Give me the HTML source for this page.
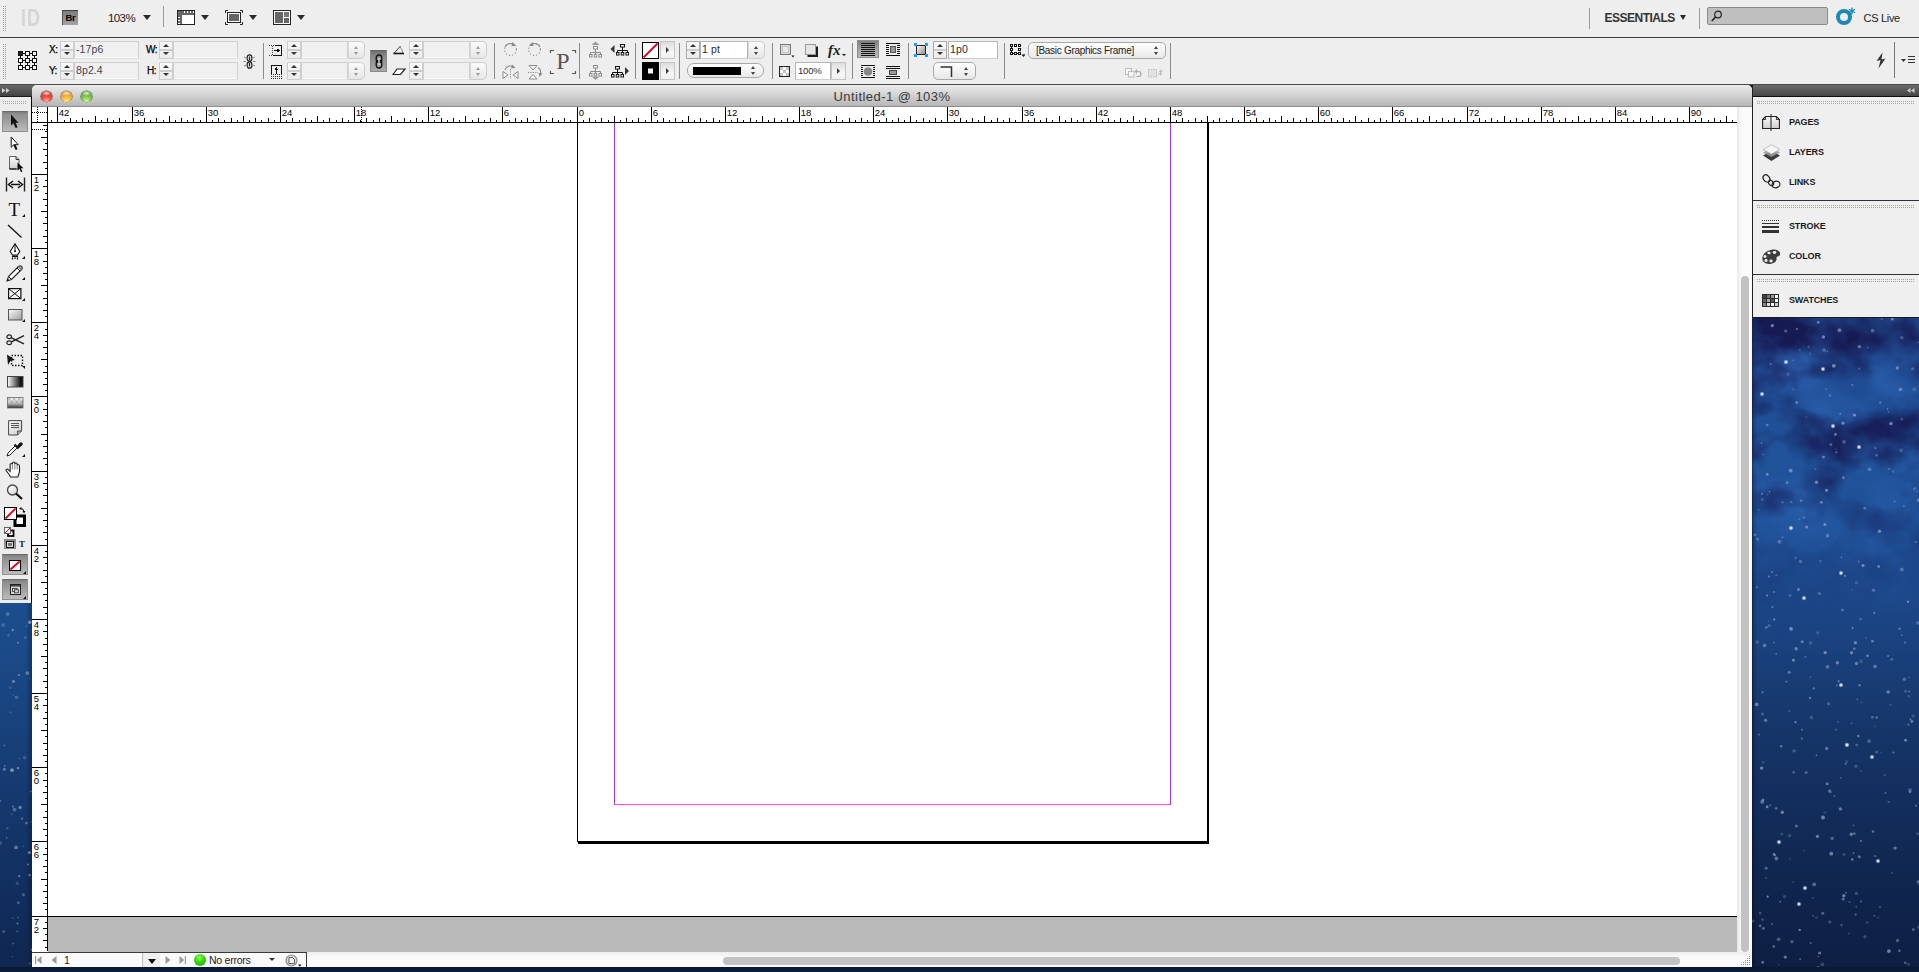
<!DOCTYPE html>
<html lang="en">
<head>
<meta charset="utf-8">
<title>Untitled-1 @ 103%</title>
<style>
*{box-sizing:border-box;margin:0;padding:0}
html,body{width:1919px;height:972px;overflow:hidden;background:#0d1c3a;font-family:"Liberation Sans",sans-serif;font-size:11px;color:#222}
.abs,.abs>*{position:absolute}
#root{position:relative;width:1919px;height:972px;overflow:hidden}
#root>*{position:absolute}

/* desktop */
#deskR{left:1752px;top:318px;width:167px;height:654px;background:
 linear-gradient(90deg,rgba(6,12,30,.6) 0,rgba(6,12,30,.2) 2px,rgba(6,12,30,0) 5px),
 linear-gradient(180deg,#1d4182 0,#1f4b92 60px,#20539a 130px,#1f5198 200px,#1c4a8d 260px,#1a417e 327px,#16376b 400px,#132e5d 480px,#10264f 560px,#0d1e42 654px);overflow:hidden}
#deskL{left:0;top:603px;width:32px;height:369px;background:linear-gradient(90deg,rgba(6,12,30,0) 26px,rgba(6,12,30,.35) 32px),linear-gradient(180deg,#1c4e8d 0,#1a4986 60px,#174079 140px,#14366a 220px,#112d5c 300px,#0f2750 369px);overflow:hidden}
#deskB{left:0;top:967px;width:1919px;height:5px;background:linear-gradient(180deg,#0a1730,#0e2044)}

/* app bar */
#appbar{left:0;top:0;width:1919px;height:37px;background:#eeeeee}
#appline{left:0;top:37px;width:1919px;height:1px;background:#3c3c3c}
#ctrl{left:0;top:38px;width:1919px;height:46px;background:#eeeeee}
#ctrlline{left:0;top:84px;width:1919px;height:1px;background:#4a4a4a}


/* ---- app bar widgets ---- */
.grip{width:4px;background-image:radial-gradient(circle at .5px .5px,#9a9a9a .55px,transparent .8px);background-size:2px 2px}
.tri{width:0;height:0;border-left:4px solid transparent;border-right:4px solid transparent;border-top:5px solid #2a2a2a}
.vsep{width:1px;background:#9a9a9a}
#idlogo{left:20.5px;top:4.5px;font-size:23px;line-height:26px;color:#d5d5d5;letter-spacing:1.2px;font-weight:bold;transform:scaleX(.78);transform-origin:0 0}
#br{left:62px;top:10px;width:16px;height:15px;background:linear-gradient(180deg,#7d7d7d,#a3a3a3);border-top:1px solid #444;border-left:1px solid #555;font-size:9.5px;font-weight:bold;line-height:14px;text-align:center;color:#000;letter-spacing:-.2px}
#zoomtxt{left:108px;top:11px;font-size:11.5px;line-height:14px;color:#222;letter-spacing:-.6px}
#ess{left:1604.5px;top:11px;font-size:12px;line-height:14px;color:#333;font-weight:bold;letter-spacing:-.5px}
#search{left:1707px;top:7px;width:121px;height:18px;background:#bfbfbf;border:1px solid #8a8a8a;border-radius:2px}
#cslive{left:1863.5px;top:11px;font-size:11px;line-height:14px;color:#222;letter-spacing:-.3px}
/* ---- control panel widgets ---- */
.lab{font-size:10px;line-height:12px;color:#000;letter-spacing:-.5px;-webkit-text-stroke:.25px #000}
.sp{width:14px;height:18px;border:1px solid #cdcdcd;background:linear-gradient(180deg,#fafafa,#ebebeb)}
.sp:before{content:"";position:absolute;left:2.5px;top:2px;border-left:3.5px solid transparent;border-right:3.5px solid transparent;border-bottom:3.5px solid #333}
.sp:after{content:"";position:absolute;left:2.5px;top:10px;border-left:3.5px solid transparent;border-right:3.5px solid transparent;border-top:3.5px solid #333}
.sp i{position:absolute;left:0;top:7px;width:12px;height:2px;background:#cdcdcd}
.fd{height:18px;border:1px solid #cfcfcf;border-bottom-color:#e2e2e2;background:#f0f0f0;box-shadow:inset 0 -1px 0 #fbfbfb;font-size:10.5px;letter-spacing:.1px;line-height:15px;padding-left:1px;color:#454550}
.fd.w{background:#fff;border-color:#b5b5b5;border-bottom-color:#cfcfcf;color:#2a2a33}
.pp{width:17px;height:18px;border:1px solid #cdcdcd;border-left:1px solid #d8d8d8;border-radius:0 5px 5px 0;background:linear-gradient(180deg,#fbfbfb,#e6e6e6)}
.pp:before{content:"";position:absolute;left:5px;top:4px;border-left:2.5px solid transparent;border-right:2.5px solid transparent;border-bottom:3px solid #9a9a9a}
.pp:after{content:"";position:absolute;left:5px;top:10px;border-left:2.5px solid transparent;border-right:2.5px solid transparent;border-top:3px solid #9a9a9a}
.pp.d:before{border-bottom-color:#444}.pp.d:after{border-top-color:#444}
.ab{width:15px;height:18px;border:1px solid #c4c4c4;background:linear-gradient(180deg,#dcdcdc,#f6f6f6 60%,#f2f2f2)}
.ab:after{content:"";position:absolute;left:5px;top:4.5px;border-top:3.5px solid transparent;border-bottom:3.5px solid transparent;border-left:3.5px solid #3a3a3a}
.ico{overflow:visible}
.sp.e{border-color:#a9a9a9}
.fd.s{font-size:9.5px;letter-spacing:-.2px;padding-left:2px}

/* tools */
#toolhead{left:0;top:85px;width:40px;height:12px;background:linear-gradient(180deg,#6a6a6a,#3e3e3e)}
#tools{left:0;top:97px;width:31px;height:506px;background:#ededed}
#toolline{left:0;top:96px;width:32px;height:1px;background:#1a1a1a}
#toolsR{left:31px;top:97px;width:1px;height:506px;background:#000}

/* doc window */
#win{left:32px;top:85px;width:1720px;height:882px;background:#fff;border-radius:5px 5px 0 0;overflow:hidden}
#win>*{position:absolute}
#title{left:0;top:0;width:1720px;height:22px;background:linear-gradient(180deg,#ebebeb 0,#d7d7d7 40%,#c4c4c4 75%,#b7b7b7 100%);border-bottom:1px solid #8c8c8c;text-align:center;font-size:13px;line-height:23.500px;color:#3a3a3a;letter-spacing:.45px}
#winL{display:none}
.hr{left:16px;top:22px}
.vr{left:0;top:38px}
#corner{left:0;top:22px;width:16px;height:16px;background:#fff;border-right:1px solid #000;border-bottom:1px solid #000}
#paste{left:16px;top:38px;width:1689px;height:793px;background:#fff;overflow:hidden}
#pasteline{left:16px;top:831px;width:1689px;height:1px;background:#000}
#gray{left:16px;top:832px;width:1689px;height:35px;background:#bababa}
#vscroll{left:1705px;top:22px;width:15px;height:845px;background:linear-gradient(90deg,#e8e8e8,#fafafa 30%,#fafafa)}
#vthumb{left:1709px;top:191px;width:8px;height:676px;background:#c2c2c2;border-radius:4px}
#status{left:0;top:867px;width:1720px;height:15px;background:linear-gradient(180deg,#ececec,#fbfbfb 40%,#fbfbfb)}
#hthumb{left:691px;top:872px;width:957px;height:8px;background:#c2c2c2;border-radius:4px}


/* ---- tools ---- */
#tools svg,#tools div{position:absolute}
.tbtn{left:2px;width:26px;height:21px;background:linear-gradient(180deg,#7e7e7e 0,#8f8f8f 12%,#a2a2a2 55%,#bcbcbc 100%);border:1px solid #8f8f8f;border-top-color:#6c6c6c}
.ct{width:0;height:0;border-left:3px solid transparent;border-bottom:3px solid #111}
/* ---- panel ---- */
#panel div,#panel svg{position:absolute}
.pgrip{left:5px;width:158px;height:3px;background-image:radial-gradient(circle at .5px .5px,#a5a5a5 .6px,transparent .85px);background-size:2px 2px}
.plab{left:37px;margin-top:-1px;font-size:9px;font-weight:bold;line-height:11px;color:#1a1a1a;letter-spacing:-.15px}
.psep{left:0;width:167px;height:1px;background:#2e3138}
/* ---- title buttons ---- */
.tl{width:11px;height:11px;border-radius:6px;top:5.5px;margin-left:.5px}
/* ---- status ---- */
#status div,#status svg{position:absolute}

/* page */
#page{left:529px;top:-98px;width:631px;height:817px;border:1px solid #000;background:#fff;box-shadow:1px 2px 0 #000}
#margin{left:566px;top:-60px;width:557px;height:742px;border:1px solid #9a33ff;border-bottom-color:#ff4dff}

/* right panel */
#phead{left:1752px;top:85px;width:167px;height:11px;background:linear-gradient(180deg,#6c6c6c,#454545)}
#pheadline{left:1752px;top:96px;width:167px;height:1px;background:#111}
#panel{left:1752px;top:97px;width:167px;height:221px;background:#efefef}
#panelL{left:1752px;top:85px;width:1px;height:233px;background:#222}
#panelB{left:1752px;top:317px;width:167px;height:1px;background:#1a1a1a}
</style>
</head>
<body>
<div id="root">
  <div id="deskR"><svg width="167" height="654"><defs>
<filter id="nebD" x="0" y="0" width="100%" height="100%" color-interpolation-filters="sRGB"><feTurbulence type="fractalNoise" baseFrequency="0.017 0.021" numOctaves="4" seed="5"/><feColorMatrix type="matrix" values="0 0 0 0 0.085  0 0 0 0 0.10  0 0 0 0 0.32  2.6 0 0 0 -1.02"/></filter>
<filter id="nebL" x="0" y="0" width="100%" height="100%" color-interpolation-filters="sRGB"><feTurbulence type="fractalNoise" baseFrequency="0.013 0.016" numOctaves="3" seed="11"/><feColorMatrix type="matrix" values="0 0 0 0 0.20  0 0 0 0 0.42  0 0 0 0 0.74  0 2.2 0 0 -0.95"/></filter>
<linearGradient id="nfade" x1="0" y1="0" x2="0" y2="1"><stop offset="0" stop-color="#fff"/><stop offset=".45" stop-color="#ddd"/><stop offset=".8" stop-color="#444"/><stop offset="1" stop-color="#000"/></linearGradient>
<mask id="nmask"><rect width="167" height="300" fill="url(#nfade)"/></mask></defs>
<g mask="url(#nmask)"><rect width="167" height="300" filter="url(#nebL)"/><rect width="167" height="300" filter="url(#nebD)"/></g>
<circle cx="54.1" cy="98.7" r="0.8" fill="#b4c2dc" opacity="0.23"/>
<circle cx="89.5" cy="239.2" r="0.8" fill="#b4c2dc" opacity="0.56"/>
<circle cx="35.9" cy="56.2" r="1.7" fill="#b4c2dc" opacity="0.23"/>
<circle cx="15.1" cy="277.6" r="1.0" fill="#b4c2dc" opacity="0.58"/>
<circle cx="105.3" cy="381.3" r="0.8" fill="#b4c2dc" opacity="0.43"/>
<circle cx="66.2" cy="638.5" r="0.8" fill="#b4c2dc" opacity="0.42"/>
<circle cx="22.2" cy="274.1" r="1.0" fill="#b4c2dc" opacity="0.43"/>
<circle cx="93.6" cy="446.0" r="1.0" fill="#b4c2dc" opacity="0.43"/>
<circle cx="106.7" cy="243.5" r="1.0" fill="#b4c2dc" opacity="0.43"/>
<circle cx="103.4" cy="324.7" r="1.7" fill="#b4c2dc" opacity="0.51"/>
<circle cx="77.8" cy="603.9" r="1.5" fill="#b4c2dc" opacity="0.32"/>
<circle cx="132.7" cy="457.1" r="1.2" fill="#b4c2dc" opacity="0.23"/>
<circle cx="50.1" cy="323.8" r="1.5" fill="#b4c2dc" opacity="0.49"/>
<circle cx="48.1" cy="641.0" r="1.0" fill="#b4c2dc" opacity="0.40"/>
<circle cx="27.5" cy="223.7" r="1.9" fill="#b4c2dc" opacity="0.37"/>
<circle cx="160.7" cy="50.8" r="1.5" fill="#b4c2dc" opacity="0.34"/>
<circle cx="58.5" cy="324.8" r="1.9" fill="#b4c2dc" opacity="0.23"/>
<circle cx="15.6" cy="176.5" r="1.0" fill="#b4c2dc" opacity="0.22"/>
<circle cx="117.1" cy="423.2" r="1.9" fill="#b4c2dc" opacity="0.31"/>
<circle cx="64.4" cy="437.3" r="0.8" fill="#b4c2dc" opacity="0.58"/>
<circle cx="59.4" cy="399.5" r="1.9" fill="#b4c2dc" opacity="0.22"/>
<circle cx="128.3" cy="84.6" r="1.2" fill="#b4c2dc" opacity="0.36"/>
<circle cx="153.1" cy="324.7" r="1.1" fill="#b4c2dc" opacity="0.38"/>
<circle cx="91.8" cy="577.7" r="1.7" fill="#b4c2dc" opacity="0.55"/>
<circle cx="46.5" cy="271.6" r="1.5" fill="#b4c2dc" opacity="0.47"/>
<circle cx="63.5" cy="150.9" r="1.0" fill="#b4c2dc" opacity="0.27"/>
<circle cx="38.7" cy="152.6" r="1.9" fill="#b4c2dc" opacity="0.53"/>
<circle cx="30.5" cy="184.4" r="1.1" fill="#b4c2dc" opacity="0.37"/>
<circle cx="61.7" cy="370.4" r="1.1" fill="#b4c2dc" opacity="0.48"/>
<circle cx="86.1" cy="403.9" r="0.8" fill="#b4c2dc" opacity="0.38"/>
<circle cx="145.5" cy="622.5" r="1.7" fill="#b4c2dc" opacity="0.36"/>
<circle cx="65.8" cy="314.9" r="1.7" fill="#b4c2dc" opacity="0.22"/>
<circle cx="11.2" cy="136.5" r="1.1" fill="#b4c2dc" opacity="0.24"/>
<circle cx="100.3" cy="67.0" r="1.1" fill="#b4c2dc" opacity="0.41"/>
<circle cx="158.5" cy="401.4" r="1.0" fill="#b4c2dc" opacity="0.55"/>
<circle cx="102.5" cy="97.2" r="1.4" fill="#b4c2dc" opacity="0.58"/>
<circle cx="100.6" cy="310.1" r="1.0" fill="#b4c2dc" opacity="0.54"/>
<circle cx="165.8" cy="304.8" r="1.9" fill="#b4c2dc" opacity="0.32"/>
<circle cx="24.1" cy="490.3" r="1.4" fill="#b4c2dc" opacity="0.39"/>
<circle cx="115.6" cy="337.7" r="1.2" fill="#b4c2dc" opacity="0.58"/>
<circle cx="88.2" cy="95.9" r="0.8" fill="#b4c2dc" opacity="0.50"/>
<circle cx="49.8" cy="420.5" r="1.0" fill="#b4c2dc" opacity="0.48"/>
<circle cx="43.6" cy="239.8" r="1.1" fill="#b4c2dc" opacity="0.34"/>
<circle cx="37.2" cy="354.2" r="1.5" fill="#b4c2dc" opacity="0.45"/>
<circle cx="102.4" cy="515.6" r="1.2" fill="#b4c2dc" opacity="0.52"/>
<circle cx="136.7" cy="483.9" r="1.2" fill="#b4c2dc" opacity="0.28"/>
<circle cx="82.3" cy="478.1" r="0.8" fill="#b4c2dc" opacity="0.52"/>
<circle cx="78.9" cy="126.6" r="1.5" fill="#b4c2dc" opacity="0.38"/>
<circle cx="156.5" cy="646.2" r="1.5" fill="#b4c2dc" opacity="0.23"/>
<circle cx="17.1" cy="307.4" r="1.5" fill="#b4c2dc" opacity="0.28"/>
<circle cx="104.2" cy="588.8" r="0.8" fill="#b4c2dc" opacity="0.39"/>
<circle cx="109.0" cy="523.0" r="1.0" fill="#b4c2dc" opacity="0.53"/>
<circle cx="20.0" cy="254.1" r="1.2" fill="#b4c2dc" opacity="0.39"/>
<circle cx="29.8" cy="516.1" r="1.5" fill="#b4c2dc" opacity="0.23"/>
<circle cx="158.0" cy="472.1" r="1.9" fill="#b4c2dc" opacity="0.36"/>
<circle cx="158.1" cy="474.0" r="1.1" fill="#b4c2dc" opacity="0.60"/>
<circle cx="4.6" cy="386.4" r="1.9" fill="#b4c2dc" opacity="0.52"/>
<circle cx="24.4" cy="540.5" r="1.9" fill="#b4c2dc" opacity="0.46"/>
<circle cx="58.5" cy="358.8" r="1.1" fill="#b4c2dc" opacity="0.21"/>
<circle cx="133.5" cy="475.0" r="1.0" fill="#b4c2dc" opacity="0.41"/>
<circle cx="155.9" cy="283.7" r="1.2" fill="#b4c2dc" opacity="0.53"/>
<circle cx="35.2" cy="164.7" r="1.4" fill="#b4c2dc" opacity="0.40"/>
<circle cx="127.5" cy="213.2" r="1.7" fill="#b4c2dc" opacity="0.53"/>
<circle cx="10.2" cy="483.9" r="1.9" fill="#b4c2dc" opacity="0.46"/>
<circle cx="136.1" cy="338.0" r="1.1" fill="#b4c2dc" opacity="0.41"/>
<circle cx="87.4" cy="12.2" r="1.9" fill="#b4c2dc" opacity="0.51"/>
<circle cx="101.6" cy="507.5" r="1.1" fill="#b4c2dc" opacity="0.27"/>
<circle cx="79.1" cy="474.3" r="0.8" fill="#b4c2dc" opacity="0.33"/>
<circle cx="86.6" cy="363.3" r="1.0" fill="#b4c2dc" opacity="0.55"/>
<circle cx="9.5" cy="125.1" r="0.8" fill="#b4c2dc" opacity="0.51"/>
<circle cx="84.8" cy="367.4" r="1.0" fill="#b4c2dc" opacity="0.38"/>
<circle cx="102.3" cy="330.6" r="1.2" fill="#b4c2dc" opacity="0.48"/>
<circle cx="75.5" cy="348.8" r="1.9" fill="#b4c2dc" opacity="0.40"/>
<circle cx="41.4" cy="342.2" r="1.4" fill="#b4c2dc" opacity="0.57"/>
<circle cx="149.1" cy="132.5" r="1.9" fill="#b4c2dc" opacity="0.25"/>
<circle cx="20.3" cy="289.1" r="1.0" fill="#b4c2dc" opacity="0.47"/>
<circle cx="71.5" cy="139.1" r="1.4" fill="#b4c2dc" opacity="0.51"/>
<circle cx="149.8" cy="101.0" r="1.5" fill="#b4c2dc" opacity="0.26"/>
<circle cx="147.4" cy="632.8" r="1.2" fill="#b4c2dc" opacity="0.50"/>
<circle cx="15.7" cy="578.7" r="1.1" fill="#b4c2dc" opacity="0.60"/>
<circle cx="139.0" cy="105.6" r="1.7" fill="#b4c2dc" opacity="0.60"/>
<circle cx="67.4" cy="275.5" r="1.5" fill="#b4c2dc" opacity="0.33"/>
<circle cx="120.6" cy="12.7" r="1.9" fill="#b4c2dc" opacity="0.38"/>
<circle cx="3.0" cy="216.8" r="1.4" fill="#b4c2dc" opacity="0.40"/>
<circle cx="10.7" cy="644.2" r="1.2" fill="#b4c2dc" opacity="0.59"/>
<circle cx="17.5" cy="173.7" r="0.8" fill="#b4c2dc" opacity="0.56"/>
<circle cx="30.3" cy="494.3" r="1.7" fill="#b4c2dc" opacity="0.54"/>
<circle cx="112.9" cy="618.7" r="1.7" fill="#b4c2dc" opacity="0.26"/>
<circle cx="153.5" cy="373.2" r="1.5" fill="#b4c2dc" opacity="0.24"/>
<circle cx="9.6" cy="450.1" r="1.7" fill="#b4c2dc" opacity="0.56"/>
<circle cx="44.9" cy="11.0" r="1.0" fill="#b4c2dc" opacity="0.52"/>
<circle cx="14.0" cy="560.0" r="1.0" fill="#b4c2dc" opacity="0.31"/>
<circle cx="20.3" cy="7.6" r="1.7" fill="#b4c2dc" opacity="0.57"/>
<circle cx="44.7" cy="84.5" r="1.2" fill="#b4c2dc" opacity="0.58"/>
<circle cx="161.9" cy="171.3" r="1.1" fill="#b4c2dc" opacity="0.28"/>
<circle cx="52.1" cy="199.5" r="1.2" fill="#b4c2dc" opacity="0.32"/>
<circle cx="83.5" cy="116.3" r="1.5" fill="#b4c2dc" opacity="0.52"/>
<circle cx="166.1" cy="24.2" r="0.8" fill="#b4c2dc" opacity="0.49"/>
<circle cx="92.0" cy="123.9" r="1.9" fill="#b4c2dc" opacity="0.30"/>
<circle cx="74.7" cy="430.5" r="1.7" fill="#b4c2dc" opacity="0.46"/>
<circle cx="91.2" cy="581.2" r="1.4" fill="#b4c2dc" opacity="0.48"/>
<circle cx="164.1" cy="224.1" r="1.1" fill="#b4c2dc" opacity="0.36"/>
<circle cx="58.0" cy="35.6" r="1.1" fill="#b4c2dc" opacity="0.21"/>
<circle cx="104.4" cy="575.4" r="1.7" fill="#b4c2dc" opacity="0.27"/>
<circle cx="14.1" cy="550.2" r="1.4" fill="#b4c2dc" opacity="0.44"/>
<circle cx="115.7" cy="29.6" r="1.1" fill="#b4c2dc" opacity="0.26"/>
<circle cx="74.5" cy="172.2" r="1.5" fill="#b4c2dc" opacity="0.59"/>
<circle cx="91.4" cy="159.9" r="1.4" fill="#b4c2dc" opacity="0.29"/>
<circle cx="30.6" cy="219.3" r="1.0" fill="#b4c2dc" opacity="0.39"/>
<circle cx="84.0" cy="131.4" r="0.8" fill="#b4c2dc" opacity="0.24"/>
<circle cx="136.4" cy="94.1" r="0.8" fill="#b4c2dc" opacity="0.36"/>
<circle cx="50.0" cy="411.8" r="1.0" fill="#b4c2dc" opacity="0.43"/>
<circle cx="88.4" cy="490.9" r="1.7" fill="#b4c2dc" opacity="0.51"/>
<circle cx="120.4" cy="323.2" r="1.4" fill="#b4c2dc" opacity="0.49"/>
<circle cx="107.4" cy="28.6" r="1.7" fill="#b4c2dc" opacity="0.49"/>
<circle cx="135.6" cy="91.1" r="0.8" fill="#b4c2dc" opacity="0.53"/>
<circle cx="97.5" cy="583.9" r="1.2" fill="#b4c2dc" opacity="0.23"/>
<circle cx="7.0" cy="416.7" r="1.0" fill="#b4c2dc" opacity="0.35"/>
<circle cx="75.4" cy="33.2" r="0.8" fill="#b4c2dc" opacity="0.45"/>
<circle cx="113.7" cy="320.0" r="0.8" fill="#b4c2dc" opacity="0.38"/>
<circle cx="11.7" cy="609.9" r="1.0" fill="#b4c2dc" opacity="0.46"/>
<circle cx="11.0" cy="481.9" r="1.4" fill="#b4c2dc" opacity="0.52"/>
<circle cx="141.3" cy="153.5" r="1.2" fill="#b4c2dc" opacity="0.29"/>
<circle cx="108.5" cy="301.1" r="1.7" fill="#b4c2dc" opacity="0.23"/>
<circle cx="152.0" cy="187.9" r="0.8" fill="#b4c2dc" opacity="0.45"/>
<circle cx="107.3" cy="50.7" r="1.1" fill="#b4c2dc" opacity="0.33"/>
<circle cx="108.8" cy="453.1" r="1.1" fill="#b4c2dc" opacity="0.20"/>
<circle cx="10.1" cy="175.8" r="1.0" fill="#b4c2dc" opacity="0.48"/>
<circle cx="112.8" cy="190.2" r="1.4" fill="#b4c2dc" opacity="0.39"/>
<circle cx="77.9" cy="77.5" r="1.2" fill="#b4c2dc" opacity="0.32"/>
<circle cx="14.3" cy="309.3" r="1.4" fill="#b4c2dc" opacity="0.38"/>
<circle cx="136.9" cy="633.1" r="1.9" fill="#b4c2dc" opacity="0.60"/>
<circle cx="64.6" cy="599.4" r="1.2" fill="#b4c2dc" opacity="0.23"/>
<circle cx="15.1" cy="488.9" r="1.4" fill="#b4c2dc" opacity="0.58"/>
<circle cx="22.1" cy="536.4" r="1.4" fill="#b4c2dc" opacity="0.55"/>
<circle cx="117.5" cy="151.3" r="1.9" fill="#b4c2dc" opacity="0.36"/>
<circle cx="26.6" cy="621.3" r="1.9" fill="#b4c2dc" opacity="0.36"/>
<circle cx="121.4" cy="272.2" r="1.7" fill="#b4c2dc" opacity="0.33"/>
<circle cx="140.3" cy="1.1" r="1.5" fill="#b4c2dc" opacity="0.54"/>
<circle cx="20.0" cy="605.9" r="0.8" fill="#b4c2dc" opacity="0.56"/>
<circle cx="48.4" cy="243.4" r="1.7" fill="#b4c2dc" opacity="0.36"/>
<circle cx="145.3" cy="50.0" r="1.7" fill="#b4c2dc" opacity="0.50"/>
<circle cx="142.7" cy="183.5" r="0.8" fill="#b4c2dc" opacity="0.53"/>
<circle cx="47.7" cy="611.9" r="1.2" fill="#b4c2dc" opacity="0.59"/>
<circle cx="72.9" cy="206.4" r="1.5" fill="#b4c2dc" opacity="0.51"/>
<circle cx="71.4" cy="19.0" r="1.7" fill="#b4c2dc" opacity="0.57"/>
<circle cx="157.1" cy="359.2" r="1.0" fill="#b4c2dc" opacity="0.22"/>
<circle cx="122.3" cy="294.9" r="1.1" fill="#b4c2dc" opacity="0.46"/>
<circle cx="47.8" cy="32.0" r="1.1" fill="#b4c2dc" opacity="0.27"/>
<circle cx="69.3" cy="184.3" r="1.4" fill="#b4c2dc" opacity="0.50"/>
<circle cx="163.0" cy="170.2" r="1.2" fill="#b4c2dc" opacity="0.32"/>
<circle cx="93.1" cy="257.9" r="1.1" fill="#b4c2dc" opacity="0.46"/>
<circle cx="12.6" cy="327.4" r="1.9" fill="#b4c2dc" opacity="0.42"/>
<circle cx="75.6" cy="217.7" r="1.9" fill="#b4c2dc" opacity="0.37"/>
<circle cx="91.5" cy="159.6" r="1.1" fill="#b4c2dc" opacity="0.34"/>
<circle cx="15.2" cy="156.4" r="1.4" fill="#b4c2dc" opacity="0.52"/>
<circle cx="33.8" cy="13.1" r="1.7" fill="#b4c2dc" opacity="0.35"/>
<circle cx="124.6" cy="137.3" r="1.4" fill="#b4c2dc" opacity="0.34"/>
<circle cx="10.4" cy="181.5" r="1.5" fill="#b4c2dc" opacity="0.25"/>
<circle cx="84.1" cy="411.8" r="1.2" fill="#b4c2dc" opacity="0.24"/>
<circle cx="149.8" cy="251.5" r="1.9" fill="#b4c2dc" opacity="0.37"/>
<circle cx="52.1" cy="532.6" r="0.8" fill="#b4c2dc" opacity="0.25"/>
<circle cx="71.0" cy="499.5" r="1.9" fill="#b4c2dc" opacity="0.59"/>
<circle cx="81.8" cy="47.8" r="1.9" fill="#b4c2dc" opacity="0.59"/>
<circle cx="41.5" cy="71.3" r="1.1" fill="#b4c2dc" opacity="0.26"/>
<circle cx="162.3" cy="71.2" r="1.9" fill="#b4c2dc" opacity="0.23"/>
<circle cx="129.7" cy="0.9" r="1.1" fill="#b4c2dc" opacity="0.29"/>
<circle cx="153.6" cy="422.2" r="1.4" fill="#b4c2dc" opacity="0.58"/>
<circle cx="104.6" cy="345.5" r="1.7" fill="#b4c2dc" opacity="0.48"/>
<circle cx="18.7" cy="46.0" r="1.2" fill="#b4c2dc" opacity="0.36"/>
<circle cx="37.3" cy="393.1" r="0.8" fill="#b4c2dc" opacity="0.41"/>
<circle cx="166.4" cy="182.2" r="1.5" fill="#b4c2dc" opacity="0.46"/>
<circle cx="147.6" cy="310.8" r="1.2" fill="#b4c2dc" opacity="0.42"/>
<circle cx="4.9" cy="269.3" r="1.4" fill="#b4c2dc" opacity="0.22"/>
<circle cx="32.4" cy="578.7" r="1.7" fill="#b4c2dc" opacity="0.23"/>
<circle cx="38.0" cy="277.5" r="1.5" fill="#b4c2dc" opacity="0.29"/>
<circle cx="5.7" cy="221.1" r="1.7" fill="#b4c2dc" opacity="0.34"/>
<circle cx="66.2" cy="4.4" r="1.4" fill="#b4c2dc" opacity="0.50"/>
<circle cx="84.3" cy="134.2" r="1.2" fill="#b4c2dc" opacity="0.32"/>
<circle cx="136.9" cy="150.9" r="1.2" fill="#b4c2dc" opacity="0.31"/>
<circle cx="148.5" cy="71.3" r="1.9" fill="#b4c2dc" opacity="0.44"/>
<circle cx="149.7" cy="317.2" r="0.8" fill="#b4c2dc" opacity="0.58"/>
<circle cx="24.4" cy="257.3" r="1.2" fill="#b4c2dc" opacity="0.21"/>
<circle cx="99.6" cy="271.7" r="0.8" fill="#b4c2dc" opacity="0.27"/>
<circle cx="75.1" cy="465.7" r="1.5" fill="#b4c2dc" opacity="0.49"/>
<circle cx="166.6" cy="609.3" r="1.5" fill="#b4c2dc" opacity="0.28"/>
<circle cx="109.0" cy="343.2" r="1.9" fill="#b4c2dc" opacity="0.21"/>
<circle cx="111.0" cy="247.6" r="1.5" fill="#b4c2dc" opacity="0.59"/>
<circle cx="73.9" cy="71.3" r="1.0" fill="#b4c2dc" opacity="0.31"/>
<circle cx="58.7" cy="624.9" r="1.0" fill="#b4c2dc" opacity="0.42"/>
<circle cx="126.7" cy="248.6" r="1.4" fill="#b4c2dc" opacity="0.53"/>
<circle cx="72.2" cy="32.2" r="1.9" fill="#b4c2dc" opacity="0.28"/>
<circle cx="90.4" cy="291.9" r="1.5" fill="#b4c2dc" opacity="0.35"/>
<circle cx="149.8" cy="19.8" r="1.7" fill="#b4c2dc" opacity="0.30"/>
<circle cx="104.4" cy="264.7" r="1.7" fill="#b4c2dc" opacity="0.21"/>
<circle cx="10.5" cy="601.7" r="1.4" fill="#b4c2dc" opacity="0.28"/>
<circle cx="10.5" cy="396.1" r="1.5" fill="#b4c2dc" opacity="0.31"/>
<circle cx="159.9" cy="403.5" r="1.4" fill="#b4c2dc" opacity="0.50"/>
<circle cx="115.2" cy="604.4" r="1.4" fill="#b4c2dc" opacity="0.20"/>
<circle cx="126.2" cy="599.4" r="1.0" fill="#b4c2dc" opacity="0.21"/>
<circle cx="39.1" cy="310.8" r="1.9" fill="#b4c2dc" opacity="0.58"/>
<circle cx="64.5" cy="164.2" r="1.7" fill="#b4c2dc" opacity="0.53"/>
<circle cx="22.2" cy="324.7" r="0.8" fill="#b4c2dc" opacity="0.52"/>
<circle cx="123.3" cy="538.1" r="1.1" fill="#b4c2dc" opacity="0.44"/>
<circle cx="54.7" cy="209.0" r="1.5" fill="#b4c2dc" opacity="0.51"/>
<circle cx="99.5" cy="334.8" r="1.7" fill="#b4c2dc" opacity="0.50"/>
<circle cx="41.3" cy="42.3" r="0.8" fill="#b4c2dc" opacity="0.39"/>
<circle cx="91.0" cy="105.1" r="1.7" fill="#b4c2dc" opacity="0.55"/>
<circle cx="165.0" cy="173.2" r="1.0" fill="#b4c2dc" opacity="0.28"/>
<circle cx="70.3" cy="646.4" r="1.9" fill="#b4c2dc" opacity="0.27"/>
<circle cx="22.2" cy="301.4" r="1.2" fill="#b4c2dc" opacity="0.50"/>
<circle cx="141.4" cy="434.5" r="1.0" fill="#b4c2dc" opacity="0.51"/>
<circle cx="49.1" cy="182.7" r="1.4" fill="#b4c2dc" opacity="0.35"/>
<circle cx="123.3" cy="130.3" r="1.2" fill="#b4c2dc" opacity="0.27"/>
<circle cx="39.3" cy="184.0" r="1.2" fill="#b4c2dc" opacity="0.33"/>
<circle cx="66.1" cy="649.1" r="1.2" fill="#b4c2dc" opacity="0.46"/>
<circle cx="16.8" cy="303.4" r="0.8" fill="#b4c2dc" opacity="0.24"/>
<circle cx="79.3" cy="535.7" r="1.9" fill="#b4c2dc" opacity="0.57"/>
<circle cx="6.7" cy="192.1" r="1.0" fill="#b4c2dc" opacity="0.22"/>
<circle cx="100.3" cy="541.5" r="1.2" fill="#b4c2dc" opacity="0.57"/>
<circle cx="62.2" cy="566.4" r="1.9" fill="#b4c2dc" opacity="0.44"/>
<circle cx="129.4" cy="434.8" r="0.8" fill="#b4c2dc" opacity="0.24"/>
<circle cx="99.6" cy="405.4" r="1.2" fill="#b4c2dc" opacity="0.21"/>
<circle cx="56.8" cy="28.9" r="1.4" fill="#b4c2dc" opacity="0.22"/>
<circle cx="122.3" cy="597.7" r="0.8" fill="#b4c2dc" opacity="0.53"/>
<circle cx="68.3" cy="243.2" r="1.4" fill="#b4c2dc" opacity="0.23"/>
<circle cx="5.3" cy="324.1" r="1.9" fill="#b4c2dc" opacity="0.23"/>
<circle cx="16.9" cy="258.5" r="1.1" fill="#b4c2dc" opacity="0.46"/>
<circle cx="15.2" cy="107.1" r="1.4" fill="#b4c2dc" opacity="0.36"/>
<circle cx="47.3" cy="201.2" r="0.8" fill="#b4c2dc" opacity="0.32"/>
<circle cx="94.6" cy="443.8" r="1.5" fill="#b4c2dc" opacity="0.21"/>
<circle cx="128.0" cy="589.3" r="1.1" fill="#b4c2dc" opacity="0.34"/>
<circle cx="67.6" cy="635.0" r="1.5" fill="#b4c2dc" opacity="0.52"/>
<circle cx="70.8" cy="595.3" r="1.5" fill="#b4c2dc" opacity="0.40"/>
<circle cx="60.9" cy="579.8" r="1.1" fill="#b4c2dc" opacity="0.21"/>
<circle cx="92.1" cy="536.5" r="1.5" fill="#b4c2dc" opacity="0.23"/>
<circle cx="103.9" cy="448.3" r="1.7" fill="#b4c2dc" opacity="0.26"/>
<circle cx="58.1" cy="379.9" r="1.1" fill="#b4c2dc" opacity="0.52"/>
<circle cx="18.2" cy="487.4" r="1.1" fill="#b4c2dc" opacity="0.31"/>
<circle cx="139.8" cy="341.2" r="1.5" fill="#b4c2dc" opacity="0.31"/>
<circle cx="101.5" cy="535.1" r="0.9" fill="#b4c2dc" opacity="0.52"/>
<circle cx="103.6" cy="596.6" r="1.1" fill="#b4c2dc" opacity="0.42"/>
<circle cx="143.1" cy="530.1" r="1.7" fill="#b4c2dc" opacity="0.50"/>
<circle cx="138.5" cy="386.8" r="1.1" fill="#b4c2dc" opacity="0.21"/>
<circle cx="156.7" cy="378.2" r="1.3" fill="#b4c2dc" opacity="0.24"/>
<circle cx="41.3" cy="564.0" r="1.1" fill="#b4c2dc" opacity="0.21"/>
<circle cx="93.9" cy="574.7" r="0.9" fill="#b4c2dc" opacity="0.43"/>
<circle cx="54.1" cy="454.5" r="1.5" fill="#b4c2dc" opacity="0.39"/>
<circle cx="104.7" cy="427.1" r="1.5" fill="#b4c2dc" opacity="0.31"/>
<circle cx="41.6" cy="454.3" r="1.3" fill="#b4c2dc" opacity="0.36"/>
<circle cx="73.2" cy="334.6" r="1.7" fill="#b4c2dc" opacity="0.55"/>
<circle cx="77.7" cy="473.1" r="1.7" fill="#b4c2dc" opacity="0.47"/>
<circle cx="76.5" cy="385.7" r="1.5" fill="#b4c2dc" opacity="0.34"/>
<circle cx="11.2" cy="444.3" r="1.3" fill="#b4c2dc" opacity="0.23"/>
<circle cx="73.8" cy="493.8" r="0.9" fill="#b4c2dc" opacity="0.21"/>
<circle cx="21.8" cy="628.5" r="1.3" fill="#b4c2dc" opacity="0.47"/>
<circle cx="85.4" cy="344.7" r="1.7" fill="#b4c2dc" opacity="0.51"/>
<circle cx="109.0" cy="583.4" r="0.9" fill="#b4c2dc" opacity="0.50"/>
<circle cx="166.4" cy="566.4" r="0.9" fill="#b4c2dc" opacity="0.27"/>
<circle cx="163.9" cy="487.8" r="1.1" fill="#b4c2dc" opacity="0.44"/>
<circle cx="120.4" cy="399.3" r="1.3" fill="#b4c2dc" opacity="0.41"/>
<circle cx="42.1" cy="432.9" r="1.7" fill="#b4c2dc" opacity="0.30"/>
<circle cx="136.2" cy="373.9" r="1.7" fill="#b4c2dc" opacity="0.54"/>
<circle cx="80.2" cy="520.5" r="1.7" fill="#b4c2dc" opacity="0.38"/>
<circle cx="53.3" cy="339.0" r="1.1" fill="#b4c2dc" opacity="0.34"/>
<circle cx="106.3" cy="418.0" r="1.3" fill="#b4c2dc" opacity="0.51"/>
<circle cx="28.2" cy="583.7" r="0.9" fill="#b4c2dc" opacity="0.47"/>
<circle cx="8.1" cy="607.7" r="1.5" fill="#b4c2dc" opacity="0.39"/>
<circle cx="96.9" cy="615.6" r="0.9" fill="#b4c2dc" opacity="0.29"/>
<circle cx="89.5" cy="607.1" r="1.3" fill="#b4c2dc" opacity="0.29"/>
<circle cx="165.4" cy="515.8" r="1.3" fill="#b4c2dc" opacity="0.32"/>
<circle cx="13.6" cy="402.2" r="1.7" fill="#b4c2dc" opacity="0.46"/>
<circle cx="8.1" cy="595.1" r="1.3" fill="#b4c2dc" opacity="0.31"/>
<circle cx="161.3" cy="611.6" r="1.3" fill="#b4c2dc" opacity="0.46"/>
<circle cx="124.8" cy="399.5" r="1.3" fill="#b4c2dc" opacity="0.42"/>
<circle cx="72.2" cy="494.6" r="0.9" fill="#b4c2dc" opacity="0.25"/>
<circle cx="38.0" cy="540.6" r="0.9" fill="#b4c2dc" opacity="0.22"/>
<circle cx="94.7" cy="426.3" r="1.7" fill="#b4c2dc" opacity="0.33"/>
<circle cx="37.5" cy="517.8" r="1.7" fill="#b4c2dc" opacity="0.25"/>
<circle cx="61.2" cy="597.9" r="1.1" fill="#b4c2dc" opacity="0.25"/>
<circle cx="156.4" cy="406.7" r="1.1" fill="#b4c2dc" opacity="0.36"/>
<circle cx="10.6" cy="374.3" r="1.3" fill="#b4c2dc" opacity="0.34"/>
<circle cx="44.1" cy="330.8" r="1.7" fill="#b4c2dc" opacity="0.51"/>
<circle cx="99.3" cy="516.2" r="1.7" fill="#b4c2dc" opacity="0.53"/>
<circle cx="122.5" cy="408.3" r="0.9" fill="#b4c2dc" opacity="0.22"/>
<circle cx="88.8" cy="459.8" r="1.1" fill="#b4c2dc" opacity="0.26"/>
<circle cx="152.3" cy="361.3" r="1.7" fill="#b4c2dc" opacity="0.39"/>
<circle cx="157.1" cy="373.5" r="1.1" fill="#b4c2dc" opacity="0.38"/>
<circle cx="107.3" cy="538.8" r="1.5" fill="#b4c2dc" opacity="0.48"/>
<circle cx="29.2" cy="428.2" r="1.3" fill="#b4c2dc" opacity="0.42"/>
<circle cx="166.0" cy="563.8" r="1.5" fill="#b4c2dc" opacity="0.45"/>
<circle cx="1.1" cy="603.1" r="1.5" fill="#b4c2dc" opacity="0.23"/>
<circle cx="109.5" cy="384.4" r="0.9" fill="#b4c2dc" opacity="0.29"/>
<circle cx="107.6" cy="367.3" r="1.3" fill="#b4c2dc" opacity="0.45"/>
<circle cx="44.4" cy="508.1" r="1.5" fill="#b4c2dc" opacity="0.44"/>
<circle cx="153.2" cy="644.8" r="1.3" fill="#b4c2dc" opacity="0.42"/>
<circle cx="161.2" cy="398.0" r="1.7" fill="#b4c2dc" opacity="0.21"/>
<circle cx="43.5" cy="404.2" r="1.1" fill="#b4c2dc" opacity="0.53"/>
<circle cx="124.6" cy="433.9" r="1.5" fill="#b4c2dc" opacity="0.31"/>
<circle cx="39.9" cy="623.8" r="1.7" fill="#b4c2dc" opacity="0.36"/>
<circle cx="140.2" cy="555.1" r="0.9" fill="#b4c2dc" opacity="0.35"/>
<circle cx="121.0" cy="513.5" r="1.3" fill="#b4c2dc" opacity="0.48"/>
<circle cx="65.4" cy="518.4" r="1.7" fill="#b4c2dc" opacity="0.52"/>
<circle cx="24.1" cy="335.8" r="0.9" fill="#b4c2dc" opacity="0.42"/>
<circle cx="27.0" cy="646.6" r="0.9" fill="#b4c2dc" opacity="0.21"/>
<circle cx="23.1" cy="537.4" r="0.9" fill="#b4c2dc" opacity="0.44"/>
<circle cx="123.0" cy="348.5" r="1.7" fill="#b4c2dc" opacity="0.47"/>
<circle cx="33.3" cy="639.1" r="1.7" fill="#b4c2dc" opacity="0.51"/>
<circle cx="11.0" cy="610.8" r="1.5" fill="#b4c2dc" opacity="0.24"/>
<circle cx="34.4" cy="363.6" r="0.9" fill="#b4c2dc" opacity="0.53"/>
<circle cx="39" cy="210" r="2.3" fill="#dfe8f7" opacity=".3"/><circle cx="39" cy="210" r="1.5" fill="#f4f7ff" opacity=".8"/>
<circle cx="89" cy="255" r="2.3" fill="#dfe8f7" opacity=".3"/><circle cx="89" cy="255" r="1.5" fill="#f4f7ff" opacity=".8"/>
<circle cx="52" cy="280" r="2.3" fill="#dfe8f7" opacity=".3"/><circle cx="52" cy="280" r="1.5" fill="#f4f7ff" opacity=".8"/>
<circle cx="81" cy="108" r="2.3" fill="#dfe8f7" opacity=".3"/><circle cx="81" cy="108" r="1.5" fill="#f4f7ff" opacity=".8"/>
<circle cx="107" cy="129" r="2.3" fill="#dfe8f7" opacity=".3"/><circle cx="107" cy="129" r="1.5" fill="#f4f7ff" opacity=".8"/>
<circle cx="34" cy="44" r="2.3" fill="#dfe8f7" opacity=".3"/><circle cx="34" cy="44" r="1.5" fill="#f4f7ff" opacity=".8"/>
<circle cx="71" cy="51" r="2.3" fill="#dfe8f7" opacity=".3"/><circle cx="71" cy="51" r="1.5" fill="#f4f7ff" opacity=".8"/>
<circle cx="120" cy="439" r="2.3" fill="#dfe8f7" opacity=".3"/><circle cx="120" cy="439" r="1.5" fill="#f4f7ff" opacity=".8"/>
<circle cx="95" cy="427" r="2.3" fill="#dfe8f7" opacity=".3"/><circle cx="95" cy="427" r="1.5" fill="#f4f7ff" opacity=".8"/>
<circle cx="27" cy="524" r="2.3" fill="#dfe8f7" opacity=".3"/><circle cx="27" cy="524" r="1.5" fill="#f4f7ff" opacity=".8"/>
<circle cx="126" cy="543" r="2.3" fill="#dfe8f7" opacity=".3"/><circle cx="126" cy="543" r="1.5" fill="#f4f7ff" opacity=".8"/>
<circle cx="53" cy="570" r="2.3" fill="#dfe8f7" opacity=".3"/><circle cx="53" cy="570" r="1.5" fill="#f4f7ff" opacity=".8"/>
<circle cx="47" cy="586" r="2.3" fill="#dfe8f7" opacity=".3"/><circle cx="47" cy="586" r="1.5" fill="#f4f7ff" opacity=".8"/>
<circle cx="89" cy="367" r="2.3" fill="#dfe8f7" opacity=".3"/><circle cx="89" cy="367" r="1.5" fill="#f4f7ff" opacity=".8"/>
<circle cx="10" cy="76" r="2.3" fill="#dfe8f7" opacity=".3"/><circle cx="10" cy="76" r="1.5" fill="#f4f7ff" opacity=".8"/></svg></div>
  <div id="deskL"><svg width="32" height="370"><circle cx="14.5" cy="206.6" r="1.9" fill="#b4c2dc" opacity="0.38"/>
<circle cx="27.4" cy="70.1" r="1.9" fill="#b4c2dc" opacity="0.45"/>
<circle cx="25.4" cy="34.7" r="1.4" fill="#b4c2dc" opacity="0.26"/>
<circle cx="17.2" cy="328.6" r="0.8" fill="#b4c2dc" opacity="0.44"/>
<circle cx="12.7" cy="167.2" r="1.1" fill="#b4c2dc" opacity="0.45"/>
<circle cx="26.6" cy="23.3" r="0.8" fill="#b4c2dc" opacity="0.28"/>
<circle cx="7.7" cy="11.1" r="1.9" fill="#b4c2dc" opacity="0.33"/>
<circle cx="18.9" cy="72.1" r="1.2" fill="#b4c2dc" opacity="0.46"/>
<circle cx="16.0" cy="244.4" r="1.9" fill="#b4c2dc" opacity="0.46"/>
<circle cx="13.0" cy="203.4" r="1.0" fill="#b4c2dc" opacity="0.48"/>
<circle cx="10.1" cy="84.7" r="1.4" fill="#b4c2dc" opacity="0.21"/>
<circle cx="18.0" cy="39.8" r="1.0" fill="#b4c2dc" opacity="0.54"/>
<circle cx="12.4" cy="353.5" r="0.8" fill="#b4c2dc" opacity="0.29"/>
<circle cx="29.7" cy="19.3" r="1.7" fill="#b4c2dc" opacity="0.59"/>
<circle cx="12.7" cy="27.0" r="1.2" fill="#b4c2dc" opacity="0.51"/>
<circle cx="8.6" cy="32.2" r="1.5" fill="#b4c2dc" opacity="0.21"/>
<circle cx="13.1" cy="340.5" r="1.1" fill="#b4c2dc" opacity="0.30"/>
<circle cx="3.2" cy="22.1" r="1.9" fill="#b4c2dc" opacity="0.27"/>
<circle cx="17.9" cy="165.1" r="1.2" fill="#b4c2dc" opacity="0.59"/>
<circle cx="24.6" cy="154.7" r="1.7" fill="#b4c2dc" opacity="0.25"/>
<circle cx="13.5" cy="78.5" r="1.4" fill="#b4c2dc" opacity="0.55"/>
<circle cx="31.2" cy="218.7" r="0.8" fill="#b4c2dc" opacity="0.28"/>
<circle cx="12.6" cy="315.3" r="1.0" fill="#b4c2dc" opacity="0.22"/>
<circle cx="4.7" cy="162.9" r="0.8" fill="#b4c2dc" opacity="0.51"/>
<circle cx="10.5" cy="109.3" r="1.0" fill="#b4c2dc" opacity="0.23"/>
<circle cx="6.7" cy="234.9" r="0.8" fill="#b4c2dc" opacity="0.44"/>
<circle cx="11.9" cy="167.2" r="1.9" fill="#b4c2dc" opacity="0.53"/>
<circle cx="4.3" cy="142.5" r="1.1" fill="#b4c2dc" opacity="0.32"/>
<circle cx="7.3" cy="225.3" r="1.2" fill="#b4c2dc" opacity="0.26"/>
<circle cx="20.1" cy="204.4" r="1.7" fill="#b4c2dc" opacity="0.55"/>
<circle cx="19.3" cy="155.5" r="1.0" fill="#b4c2dc" opacity="0.24"/>
<circle cx="16.4" cy="94.2" r="1.7" fill="#b4c2dc" opacity="0.30"/>
<circle cx="26.4" cy="220.1" r="1.4" fill="#b4c2dc" opacity="0.41"/>
<circle cx="29.7" cy="360.6" r="1.1" fill="#b4c2dc" opacity="0.29"/>
<circle cx="17.9" cy="314.5" r="1.0" fill="#b4c2dc" opacity="0.31"/>
<circle cx="29.4" cy="75.3" r="0.8" fill="#b4c2dc" opacity="0.23"/>
<circle cx="13.2" cy="91.9" r="0.8" fill="#b4c2dc" opacity="0.27"/>
<circle cx="11.8" cy="211.1" r="1.1" fill="#b4c2dc" opacity="0.24"/>
<circle cx="4.4" cy="166.2" r="1.5" fill="#b4c2dc" opacity="0.46"/>
<circle cx="22.1" cy="215.7" r="1.1" fill="#b4c2dc" opacity="0.44"/>
<circle cx="29.6" cy="272.1" r="1.3" fill="#b4c2dc" opacity="0.45"/>
<circle cx="30.8" cy="188.4" r="0.9" fill="#b4c2dc" opacity="0.37"/>
<circle cx="23.4" cy="243.3" r="0.9" fill="#b4c2dc" opacity="0.23"/>
<circle cx="17.5" cy="320.5" r="1.1" fill="#b4c2dc" opacity="0.48"/>
<circle cx="29.3" cy="249.4" r="1.5" fill="#b4c2dc" opacity="0.52"/>
<circle cx="27.9" cy="261.5" r="0.9" fill="#b4c2dc" opacity="0.50"/>
<circle cx="18.3" cy="299.8" r="1.5" fill="#b4c2dc" opacity="0.33"/>
<circle cx="0.4" cy="197.8" r="0.9" fill="#b4c2dc" opacity="0.42"/>
<circle cx="31.8" cy="346.8" r="1.3" fill="#b4c2dc" opacity="0.34"/>
<circle cx="23.5" cy="291.7" r="1.5" fill="#b4c2dc" opacity="0.36"/>
<circle cx="17.3" cy="280.2" r="1.7" fill="#b4c2dc" opacity="0.21"/>
<circle cx="19.2" cy="273.2" r="1.1" fill="#b4c2dc" opacity="0.54"/>
<circle cx="3.6" cy="328.4" r="1.5" fill="#b4c2dc" opacity="0.29"/>
<circle cx="0.4" cy="240.0" r="1.7" fill="#b4c2dc" opacity="0.27"/></svg></div>
  <div id="deskB"></div>


  <div id="appbar" class="abs">
    <div class="grip" style="left:3px;top:6px;height:26px"></div>
    <div id="idlogo">ID</div>
    <div id="br">Br</div>
    <div id="zoomtxt">103%</div>
    <div class="tri" style="left:143px;top:15px"></div>
    <div class="vsep" style="left:163px;top:6px;height:21px"></div>
    <svg class="ico" style="left:177px;top:10px" width="19" height="16" viewBox="0 0 19 16"><rect x=".5" y=".5" width="17" height="14" fill="#fff" stroke="#222"/><rect x="1" y="1" width="16" height="4" fill="#666"/><rect x="1" y="1" width="4" height="13" fill="#666"/><g fill="#fff"><rect x="7" y="1" width="1" height="2"/><rect x="10" y="1" width="1" height="2"/><rect x="13" y="1" width="1" height="2"/><rect x="16" y="1" width="1" height="2"/><rect x="1" y="7" width="2" height="1"/><rect x="1" y="10" width="2" height="1"/><rect x="1" y="13" width="2" height="1"/></g></svg>
    <div class="tri" style="left:201px;top:15px"></div>
    <svg class="ico" style="left:225px;top:10px" width="19" height="16" viewBox="0 0 19 16"><path d="M.5 3V.5H3M15 .5h2.5V3M17.5 12v2.500H15M3 14.500H.5V12" fill="none" stroke="#222"/><rect x="2.500" y="2.500" width="13" height="10" fill="#fff" stroke="#222"/><rect x="4" y="4" width="10" height="7" fill="#666"/></svg>
    <div class="tri" style="left:249px;top:15px"></div>
    <svg class="ico" style="left:273px;top:10px" width="19" height="16" viewBox="0 0 19 16"><rect x=".5" y=".5" width="17" height="14" fill="#fff" stroke="#222"/><rect x="2" y="2" width="8" height="11" fill="#666"/><rect x="11" y="2" width="5" height="5" fill="#777"/><rect x="11" y="8" width="5" height="5" fill="#666"/></svg>
    <div class="tri" style="left:297px;top:15px"></div>

    <div class="vsep" style="left:1589px;top:8px;height:21px"></div>
    <div id="ess">ESSENTIALS</div>
    <div class="tri" style="left:1680px;top:15px;border-left-width:3.5px;border-right-width:3.5px"></div>
    <div class="vsep" style="left:1699px;top:8px;height:21px"></div>
    <div id="search"><svg style="position:absolute;left:3px;top:2px" width="12" height="12" viewBox="0 0 12 12"><circle cx="7" cy="4.500" r="3.300" fill="none" stroke="#222" stroke-width="1.200"/><path d="M4.600 7L.8 11" stroke="#222" stroke-width="1.600"/></svg></div>
    <svg class="ico" style="left:1835px;top:6px" width="22" height="20" viewBox="0 0 22 20"><circle cx="9" cy="11" r="6" fill="none" stroke="#1b89b3" stroke-width="4"/><g stroke="#1b89b3" stroke-width="1.300"><path d="M17 1.500v7M14 3.200l6 3.600M20 3.200l-6 3.600"/></g><circle cx="17" cy="5" r="2.200" fill="#eee" opacity=".0"/></svg>
    <div id="cslive">CS Live</div>
  </div>
  <div id="appline"></div>
  <div id="ctrl" class="abs">
    <div class="grip" style="left:3px;top:6px;height:36px"></div>
    <svg class="ico" style="left:18px;top:13px" width="20" height="20" viewBox="0 0 20 20" shape-rendering="crispEdges"><path d="M2.500 2.500h14v14h-14zM9.500 2.500v14M2.500 9.500h14" fill="none" stroke="#111"/><rect x="0.5" y="0.5" width="4" height="4" fill="#222" stroke="#111"/><rect x="7.5" y="0.5" width="4" height="4" fill="#fff" stroke="#111"/><rect x="14.5" y="0.5" width="4" height="4" fill="#fff" stroke="#111"/><rect x="0.5" y="7.5" width="4" height="4" fill="#fff" stroke="#111"/><rect x="7.5" y="7.5" width="4" height="4" fill="#fff" stroke="#111"/><rect x="14.5" y="7.5" width="4" height="4" fill="#fff" stroke="#111"/><rect x="0.5" y="14.5" width="4" height="4" fill="#fff" stroke="#111"/><rect x="7.5" y="14.5" width="4" height="4" fill="#fff" stroke="#111"/><rect x="14.5" y="14.5" width="4" height="4" fill="#fff" stroke="#111"/></svg>
    <div class="lab" style="left:49px;top:6px">X:</div>
    <div class="lab" style="left:49px;top:27px">Y:</div>
    <div class="sp" style="left:60px;top:3px"><i></i></div>
    <div class="fd " style="left:74px;top:3px;width:65px">-17p6</div>
    <div class="sp" style="left:60px;top:24px"><i></i></div>
    <div class="fd " style="left:74px;top:24px;width:65px">8p2.4</div>
    <div class="lab" style="left:146px;top:6px">W:</div>
    <div class="lab" style="left:147px;top:27px">H:</div>
    <div class="sp" style="left:159px;top:3px"><i></i></div>
    <div class="fd " style="left:173px;top:3px;width:65px"></div>
    <div class="sp" style="left:159px;top:24px"><i></i></div>
    <div class="fd " style="left:173px;top:24px;width:65px"></div>
    <svg class="ico" style="left:243px;top:16px" width="13" height="15" viewBox="0 0 13 15"><g fill="none" stroke="#222" stroke-width="1.200"><rect x="4.200" y=".8" width="4.600" height="6.400" rx="2.300"/><rect x="4.200" y="7.800" width="4.600" height="6.400" rx="2.300"/><path d="M6.500 2.500v3.500M6.500 9v3.500"/></g><g stroke="#666" stroke-width=".8"><path d="M1 3l2 1M1 12l2-1M12 3l-2 1M12 12l-2-1M.5 7.500h2.500M10 7.500h2.500"/></g></svg>
    <div class="vsep" style="left:263px;top:5px;height:36px;background:#8a8a8a"></div>
    <svg class="ico" style="left:268px;top:6px" width="15" height="13" viewBox="0 0 15 13" shape-rendering="crispEdges"><path d="M.5 1.500h5M.5 11.500h5M4.500 1.500v10" fill="none" stroke="#444" stroke-dasharray="1 1"/><path d="M7 1.500h6.500v10H5" fill="none" stroke="#111" stroke-width="1"/><path d="M6 6.500h5" stroke="#111"/><path d="M9 4.500l3 2-3 2z" fill="#111"/></svg>
    <svg class="ico" style="left:270px;top:27px" width="13" height="15" viewBox="0 0 13 15" shape-rendering="crispEdges"><path d="M1.500 9V.5h10V9" fill="none" stroke="#111"/><path d="M1 9.500h11M1 11.500h11M1 13.500h11" fill="none" stroke="#333" stroke-dasharray="1 1"/><path d="M6.500 3v6" stroke="#111"/><path d="M4.500 5l2-3 2 3z" fill="#111"/></svg>
    <div class="sp" style="left:287px;top:3px"><i></i></div>
    <div class="fd " style="left:301px;top:3px;width:47px"></div>
    <div class="pp " style="left:348px;top:3px"></div>
    <div class="sp" style="left:287px;top:24px"><i></i></div>
    <div class="fd " style="left:301px;top:24px;width:47px"></div>
    <div class="pp " style="left:348px;top:24px"></div>
    <div style="left:370px;top:12px;width:17px;height:22px;background:linear-gradient(180deg,#6f6f6f,#8b8b8b 30%,#ababab);border:1px solid #8a8a8a;border-top-color:#666"><svg style="position:absolute;left:4px;top:3px" width="8" height="15" viewBox="0 0 8 15"><g fill="none" stroke="#111" stroke-width="1.300"><rect x="1.200" y="1" width="5.600" height="7.500" rx="2.800"/><rect x="1.200" y="6.500" width="5.600" height="7.500" rx="2.800"/></g><path d="M4 4v7" stroke="#eee" stroke-width="1.200"/></svg></div>
    <svg class="ico" style="left:393px;top:7px" width="12" height="10" viewBox="0 0 12 10"><path d="M.5 8.500H11" fill="none" stroke="#111" stroke-width="1.600"/><path d="M.8 8.500L7.500 1" fill="none" stroke="#222" stroke-width=".9"/><path d="M7.500 2.500q2 2.500 2 5" fill="none" stroke="#222" stroke-dasharray="1 1.200"/></svg>
    <svg class="ico" style="left:392px;top:30px" width="14" height="8" viewBox="0 0 14 8"><path d="M1 6.500L5 1H13L8.500 6.500z" fill="#fff" stroke="#222" stroke-width="1.200"/></svg>
    <div class="sp" style="left:409px;top:3px"><i></i></div>
    <div class="fd " style="left:423px;top:3px;width:47px"></div>
    <div class="pp " style="left:470px;top:3px"></div>
    <div class="sp" style="left:409px;top:24px"><i></i></div>
    <div class="fd " style="left:423px;top:24px;width:47px"></div>
    <div class="pp " style="left:470px;top:24px"></div>
    <div class="vsep" style="left:494px;top:5px;height:36px;background:#8a8a8a"></div>
    <svg class="ico" style="left:503px;top:4px" width="15" height="15" viewBox="0 0 15 15"><circle cx="7.500" cy="7.500" r="6" fill="none" stroke="#8a8a8a" stroke-width="1.100" stroke-dasharray="1.200 2"/><path d="M2 5A6 6 0 0 1 10.500 2.300" fill="none" stroke="#8a8a8a" stroke-width="1.100"/><path d="M9.500 0l3.500 3.800-4.500.4z" fill="#8a8a8a"/></svg>
    <svg class="ico" style="left:527px;top:4px" width="15" height="15" viewBox="0 0 15 15"><circle cx="7.500" cy="7.500" r="6" fill="none" stroke="#8a8a8a" stroke-width="1.100" stroke-dasharray="1.200 2"/><path d="M13 5A6 6 0 0 0 4.500 2.300" fill="none" stroke="#8a8a8a" stroke-width="1.100"/><path d="M5.500 0L2 3.800l4.500.4z" fill="#8a8a8a"/></svg>
    <svg class="ico" style="left:502px;top:26px" width="17" height="16" viewBox="0 0 17 16"><path d="M1 7.500l5 3.500-5 3.500zM16 7.500l-5 3.500 5 3.500z" fill="#fff" stroke="#8a8a8a"/><path d="M8.500 5v10" stroke="#8a8a8a" stroke-dasharray="1.200 1.200"/><path d="M3 6A5.500 5.500 0 0 1 11.500 3" fill="none" stroke="#8a8a8a" stroke-width="1.100"/><path d="M10 .5l3.500 3.300-4.300.7z" fill="#8a8a8a"/></svg>
    <svg class="ico" style="left:527px;top:26px" width="17" height="16" viewBox="0 0 17 16"><path d="M2 1.500h8L6 6zM2 15h8L6 10.500z" fill="#fff" stroke="#8a8a8a"/><path d="M2.500 1.500h7" stroke="#8a8a8a" stroke-dasharray="1 1"/><path d="M1 8.500h10" stroke="#8a8a8a" stroke-dasharray="1.200 1.200"/><path d="M11 3.500A5.500 5.500 0 0 1 13 11" fill="none" stroke="#8a8a8a" stroke-width="1.100"/><path d="M15.500 9.500l-3 3.500-1-4.200z" fill="#8a8a8a"/></svg>
    <svg class="ico" style="left:549.5px;top:11px" width="26" height="26" viewBox="0 0 26 26"><path d="M.5 4V1.500H4M22 1.500h3.500V4M25.500 22v2.500H22M4 24.500H.5V22" fill="none" stroke="#555" stroke-width="1.200"/><text x="13" y="20" font-family="Liberation Serif, serif" font-size="24" text-anchor="middle" fill="#555">P</text></svg>
    <div class="vsep" style="left:579px;top:5px;height:36px;background:#8a8a8a"></div>
    <svg class="ico" style="left:589px;top:4px" width="13" height="16" viewBox="0 -3 13 16"><path d="M2.500 0h8l-4-3.500z" fill="#999"/><g fill="#fff" stroke="#8a8a8a"><path d="M6.500 4v3M1.500 10V7.500h10V10M6.500 7.500V10" fill="none"/><rect x="4.500" y="1.500" width="4" height="2.500"/><rect x=".5" y="9.500" width="2.500" height="2.500"/><rect x="5.250" y="9.500" width="2.500" height="2.500"/><rect x="10" y="9.500" width="2.500" height="2.500"/></g></svg>
    <svg class="ico" style="left:589px;top:26px" width="13" height="16" viewBox="0 0 13 16"><path d="M2.500 12.500h8l-4 3.500z" fill="#999"/><g fill="#fff" stroke="#8a8a8a"><path d="M6.500 4v3M1.500 10V7.500h10V10M6.500 7.500V10" fill="none"/><rect x="4.500" y="1.500" width="4" height="2.500"/><rect x=".5" y="9.500" width="2.500" height="2.500"/><rect x="5.250" y="9.500" width="2.500" height="2.500"/><rect x="10" y="9.500" width="2.500" height="2.500"/></g></svg>
    <svg class="ico" style="left:610px;top:5px" width="19" height="13" viewBox="-6 0 19 13"><path d="M-1.500 2v8L-5.500 6z" fill="#333"/><g fill="#fff" stroke="#111"><path d="M6.500 4v3M1.500 10V7.500h10V10M6.500 7.500V10" fill="none"/><rect x="4.500" y="1.500" width="4" height="2.500"/><rect x=".5" y="9.500" width="2.500" height="2.500"/><rect x="5.250" y="9.500" width="2.500" height="2.500"/><rect x="10" y="9.500" width="2.500" height="2.500"/></g></svg>
    <svg class="ico" style="left:611px;top:27px" width="19" height="13" viewBox="0 0 19 13"><path d="M14 2v8l4-4z" fill="#333"/><g fill="#fff" stroke="#111"><path d="M6.500 4v3M1.500 10V7.500h10V10M6.500 7.500V10" fill="none"/><rect x="4.500" y="1.500" width="4" height="2.500"/><rect x=".5" y="9.500" width="2.500" height="2.500"/><rect x="5.250" y="9.500" width="2.500" height="2.500"/><rect x="10" y="9.500" width="2.500" height="2.500"/></g></svg>
    <div class="vsep" style="left:635px;top:5px;height:36px;background:#8a8a8a"></div>
    <svg class="ico" style="left:642px;top:4px" width="17" height="17" viewBox="0 0 17 17"><rect x=".5" y=".5" width="16" height="16" fill="#fff" stroke="#000"/><path d="M1.500 15.500L15.500 1.500" stroke="#d7001f" stroke-width="1.800"/></svg>
    <div class="ab" style="left:660px;top:3px"></div>
    <svg class="ico" style="left:642px;top:24px" width="17" height="18" viewBox="0 0 17 18"><rect width="17" height="18" fill="#000"/><rect x="6" y="6.500" width="5" height="5" fill="#f4f4f4"/></svg>
    <div class="ab" style="left:660px;top:24px"></div>
    <div class="vsep" style="left:679px;top:5px;height:36px;background:#8a8a8a"></div>
    <div class="sp e" style="left:686px;top:3px"><i></i></div>
    <div class="fd w" style="left:700px;top:3px;width:48px">1 pt</div>
    <div class="pp d" style="left:748px;top:3px"></div>
    <div style="left:687px;top:25px;width:77px;height:15px;border:1px solid #a9a9a9;border-radius:7px;background:linear-gradient(180deg,#fefefe,#e9e9e9)"><div style="position:absolute;left:5px;top:3px;width:48px;height:8px;background:#000"></div><div style="position:absolute;left:63px;top:2px;border-left:2.500px solid transparent;border-right:2.500px solid transparent;border-bottom:3px solid #444"></div><div style="position:absolute;left:63px;top:8px;border-left:2.500px solid transparent;border-right:2.500px solid transparent;border-top:3px solid #444"></div></div>
    <div class="vsep" style="left:772px;top:5px;height:36px;background:#8a8a8a"></div>
    <svg class="ico" style="left:780px;top:6px" width="16" height="14" viewBox="0 0 16 14"><rect x=".5" y=".5" width="10" height="10" fill="#d9d9d9" stroke="#777"/><rect x="2.500" y="2.500" width="6" height="6" fill="#e8e8e8" stroke="#aaa" stroke-dasharray="1 1"/><path d="M11.500 11.500h3l-1.500 2z" fill="#111"/></svg>
    <svg class="ico" style="left:805px;top:6px" width="14" height="14" viewBox="0 0 14 14"><rect x="2.500" y="2.500" width="10.500" height="10.500" fill="#1c1c1c"/><rect x=".5" y=".5" width="10" height="10" fill="#e6e6e6" stroke="#999"/></svg>
    <div style="left:828px;top:3px;font-family:'Liberation Serif',serif;font-style:italic;font-weight:bold;font-size:15px;line-height:18px;color:#222">fx</div>
    <div style="left:842px;top:16px;border-left:2px solid transparent;border-right:2px solid transparent;border-top:2.500px solid #111"></div>
    <svg class="ico" style="left:779px;top:28px" width="11" height="11" viewBox="0 0 11 11" shape-rendering="crispEdges"><rect x=".5" y=".5" width="10" height="10" fill="#fff" stroke="#222"/><g fill="#c4c4c4"><rect x="1" y="1" width="3" height="3"/><rect x="7" y="1" width="3" height="3"/><rect x="4" y="4" width="3" height="3"/><rect x="1" y="7" width="3" height="3"/><rect x="7" y="7" width="3" height="3"/></g></svg>
    <div class="fd w s" style="left:795px;top:24px;width:36px">100%</div>
    <div class="ab" style="left:831px;top:24px"></div>
    <div class="vsep" style="left:852px;top:5px;height:36px;background:#8a8a8a"></div>
    <div style="left:857px;top:2px;width:22px;height:18px;background:linear-gradient(180deg,#7f7f7f,#a2a2a2 50%,#b9b9b9);border:1px solid #8d8d8d"></div>
    <svg class="ico" style="left:861px;top:5px" width="14" height="13" viewBox="0 0 14 13" shape-rendering="crispEdges"><rect x="0" y="0" width="14" height="1" fill="#111"/><rect x="0" y="2" width="14" height="1" fill="#111"/><rect x="0" y="4" width="14" height="1" fill="#111"/><rect x="0" y="6" width="14" height="1" fill="#111"/><rect x="0" y="8" width="14" height="1" fill="#111"/><rect x="0" y="10" width="14" height="1" fill="#111"/><rect x="0" y="12" width="14" height="1" fill="#111"/></svg>
    <svg class="ico" style="left:886px;top:5px" width="14" height="13" viewBox="0 0 14 13" shape-rendering="crispEdges"><rect x="0" y="0" width="14" height="1" fill="#111"/><rect x="0" y="12" width="14" height="1" fill="#111"/><rect x="0" y="2" width="3" height="1" fill="#111"/><rect x="0" y="4" width="3" height="1" fill="#111"/><rect x="0" y="6" width="3" height="1" fill="#111"/><rect x="0" y="8" width="3" height="1" fill="#111"/><rect x="0" y="10" width="3" height="1" fill="#111"/><rect x="11" y="2" width="3" height="1" fill="#111"/><rect x="11" y="4" width="3" height="1" fill="#111"/><rect x="11" y="6" width="3" height="1" fill="#111"/><rect x="11" y="8" width="3" height="1" fill="#111"/><rect x="11" y="10" width="3" height="1" fill="#111"/><rect x="4.500" y="3.500" width="5" height="6" fill="#999" stroke="#555"/></svg>
    <svg class="ico" style="left:861px;top:27px" width="14" height="13" viewBox="0 0 14 13"><rect x="0" y="0" width="14" height="1" fill="#111"/><rect x="0" y="12" width="14" height="1" fill="#111"/><rect x="0" y="2" width="2" height="1" fill="#111"/><rect x="0" y="4" width="2" height="1" fill="#111"/><rect x="0" y="6" width="2" height="1" fill="#111"/><rect x="0" y="8" width="2" height="1" fill="#111"/><rect x="0" y="10" width="2" height="1" fill="#111"/><rect x="12" y="2" width="2" height="1" fill="#111"/><rect x="12" y="4" width="2" height="1" fill="#111"/><rect x="12" y="6" width="2" height="1" fill="#111"/><rect x="12" y="8" width="2" height="1" fill="#111"/><rect x="12" y="10" width="2" height="1" fill="#111"/><circle cx="7" cy="6.500" r="4.300" fill="#888"/></svg>
    <svg class="ico" style="left:886px;top:28px" width="14" height="13" viewBox="0 0 14 13" shape-rendering="crispEdges"><rect x="0" y="0" width="14" height="1" fill="#111"/><rect x="0" y="2" width="14" height="1" fill="#111"/><rect x="0" y="10" width="14" height="1" fill="#111"/><rect x="0" y="12" width="14" height="1" fill="#111"/><rect x="3.500" y="4.500" width="7" height="4" fill="#999" stroke="#444"/></svg>
    <div class="vsep" style="left:908px;top:5px;height:36px;background:#8a8a8a"></div>
    <svg class="ico" style="left:914px;top:5px" width="15" height="15" viewBox="0 0 15 15" shape-rendering="crispEdges"><defs><linearGradient id="cg" x1="0" y1="0" x2="1" y2="1"><stop offset="0" stop-color="#fff"/><stop offset="1" stop-color="#888"/></linearGradient></defs><rect x="2.500" y="2.500" width="9" height="9" fill="url(#cg)" stroke="#222"/><g fill="#1b9cff"><rect x="0" y="0" width="3" height="3"/><rect x="11" y="0" width="3" height="3"/><rect x="0" y="11" width="3" height="3"/><rect x="11" y="11" width="3" height="3"/></g></svg>
    <div class="sp e" style="left:933px;top:3px"><i></i></div>
    <div class="fd w" style="left:948px;top:3px;width:50px">1p0</div>
    <div style="left:933px;top:24px;width:43px;height:18px;border:1px solid #a9a9a9;border-radius:5px;background:linear-gradient(180deg,#fefefe,#e7e7e7)"><svg style="position:absolute;left:6px;top:3px" width="13" height="11" viewBox="0 0 13 11"><path d="M.5 1H11.500V11" fill="none" stroke="#333" stroke-width="1.500"/></svg><div style="position:absolute;left:30px;top:4px;border-left:2.500px solid transparent;border-right:2.500px solid transparent;border-bottom:3px solid #444"></div><div style="position:absolute;left:30px;top:10px;border-left:2.500px solid transparent;border-right:2.500px solid transparent;border-top:3px solid #444"></div></div>
    <div class="vsep" style="left:1004px;top:5px;height:36px;background:#8a8a8a"></div>
    <svg class="ico" style="left:1010px;top:6px" width="16" height="13" viewBox="0 0 16 13" shape-rendering="crispEdges"><rect x="1.500" y="1.500" width="8" height="8" fill="none" stroke="#111" stroke-dasharray="1 1"/><g fill="#fff" stroke="#111"><rect x=".5" y=".5" width="2" height="2"/><rect x="4.500" y=".5" width="2" height="2"/><rect x="8.500" y=".5" width="2" height="2"/><rect x=".5" y="4.500" width="2" height="2"/><rect x="8.500" y="4.500" width="2" height="2"/><rect x=".5" y="8.500" width="2" height="2"/><rect x="4.500" y="8.500" width="2" height="2"/><rect x="8.500" y="8.500" width="2" height="2"/></g><path d="M11.500 10.500h4l-2 2.500z" fill="#111" shape-rendering="auto"/></svg>
    <div style="left:1028px;top:4px;width:138px;height:17px;border:1px solid #a9a9a9;border-radius:5px;background:linear-gradient(180deg,#fefefe,#e9e9e9);font-size:10px;letter-spacing:-.3px;line-height:15.500px;padding-left:7px;color:#1d1d28">[Basic Graphics Frame]<div style="position:absolute;left:125px;top:3px;border-left:2.500px solid transparent;border-right:2.500px solid transparent;border-bottom:3px solid #444"></div><div style="position:absolute;left:125px;top:9px;border-left:2.500px solid transparent;border-right:2.500px solid transparent;border-top:3px solid #444"></div></div>
    <svg class="ico" style="left:1125px;top:30px" width="40" height="10" viewBox="0 0 40 10"><g fill="#f4f4f4" stroke="#bdbdbd"><rect x=".5" y=".5" width="6" height="6"/><rect x="3.500" y="3.500" width="5.500" height="5.500"/></g><path d="M10.500 3.500h3a2.500 2.500 0 0 1 0 5h-2" fill="none" stroke="#aaa" stroke-width="1.200"/><path d="M12 1l-2.500 2.500L12 6z" fill="#aaa"/><rect x="23.500" y="1.500" width="8" height="7.500" fill="#e2e2e2" stroke="#bbb" stroke-dasharray="1.500 1"/><path d="M33 7l5-5M34 3l3 3M35.500 1.500v6" stroke="#b5b5b5" stroke-width=".9"/></svg>
    <div class="vsep" style="left:1170px;top:5px;height:36px;background:#8a8a8a"></div>
    <svg class="ico" style="left:1875px;top:14px" width="12" height="17" viewBox="0 0 12 17"><path d="M7.500 .5L1.500 9l4-1L3.500 16.500 10.500 6.500l-4 1z" fill="#333"/></svg>
    <div class="vsep" style="left:1894px;top:4px;height:36px;background:#777"></div>
    <svg class="ico" style="left:1901px;top:18px" width="15" height="8" viewBox="0 0 15 8" shape-rendering="crispEdges"><path d="M0 3h5L2.500 6z" fill="#333" shape-rendering="auto"/><rect x="7" y="0" width="7" height="1" fill="#333"/><rect x="7" y="3" width="7" height="1" fill="#333"/><rect x="7" y="6" width="7" height="1" fill="#333"/></svg>
  </div><div id="ctrlline"></div>

  <div id="toolhead"><svg style="position:absolute;left:2px;top:3px" width="8" height="5" viewBox="0 0 8 5"><path d="M0 0l3.500 2.500L0 5zM4 0l3.500 2.500L4 5z" fill="#d0d0d0"/></svg></div>
  <div id="toolline"></div>
  <div id="tools">
    <div class="grip" style="left:3px;top:4px;width:24px;height:4px;background-image:radial-gradient(circle at .5px .5px,#a8a8a8 .6px,transparent .85px);background-size:2px 2px"></div>
    <div class="tbtn" style="top:14px"></div>
    <svg style="left:10px;top:17px" width="10" height="15" viewBox="0 0 10 15"><path d="M4.300 8.500l2.300 5.200" stroke="#111" stroke-width="2.100"/><path d="M1 .5v11l2.900-2.700h4.600z" fill="#111"/></svg>
    <svg style="left:10px;top:39px" width="10" height="15" viewBox="0 0 10 15"><path d="M4.300 8.500l2.300 5.200" stroke="#111" stroke-width="2.100"/><path d="M1.200 1v10.200l2.700-2.500h4.300z" fill="#fff" stroke="#111" stroke-width="1"/></svg>
    <svg style="left:9px;top:59px" width="15" height="17" viewBox="0 0 15 17"><defs><linearGradient id="pgt" x1="0" y1="0" x2="0" y2="1"><stop offset="0" stop-color="#fff"/><stop offset="1" stop-color="#cfcfcf"/></linearGradient></defs><path d="M.5 .5h6.500l3 3v9.500H.5z" fill="url(#pgt)" stroke="#555" stroke-width=".9"/><path d="M7 .5v3h3" fill="none" stroke="#333"/><path d="M.5 13h7" stroke="#111" stroke-width="1.200"/><path d="M8.500 6.500v8l2-1.800 1.500 3.500 1.400-.6-1.500-3.400h2.600z" fill="#111"/></svg>
    <svg style="left:5px;top:80px" width="21" height="15" viewBox="0 0 21 15"><path d="M1.500 .5v14M19.500 .5v14" stroke="#222" stroke-width="1.400"/><path d="M6 7.500h9" stroke="#111" stroke-width="1.500"/><path d="M8 4l-4.500 3.500L8 11M13 4l4.500 3.500L13 11" fill="none" stroke="#111" stroke-width="1.500"/></svg>
    <div style="left:8.5px;top:102.5px;font-family:'Liberation Serif',serif;font-size:19px;line-height:20px;color:#111">T</div>
    <div class="ct" style="left:22px;top:117px"></div>
    <svg style="left:7px;top:127px" width="16" height="15" viewBox="0 0 16 15"><path d="M1 1l13.500 12.500" stroke="#111" stroke-width="1.300"/></svg>
    <svg style="left:9px;top:146px" width="12" height="17" viewBox="0 0 12 17"><path d="M6 .8L1.200 8.500 3.500 12h5l2.300-3.500z" fill="#fff" stroke="#111" stroke-width="1.100"/><path d="M6 2v6" stroke="#111"/><circle cx="6" cy="8.300" r="1" fill="#111"/><rect x="3" y="12.500" width="6" height="1.600" fill="#111"/><path d="M3.500 14.500v2M8.500 14.500v2M6 14.500v1.500" stroke="#111" stroke-width="1.200"/></svg>
    <div class="ct" style="left:22px;top:159px"></div>
    <svg style="left:6px;top:168px" width="17" height="17" viewBox="0 0 17 17"><path d="M1 16l1.500-4.500L12.500 1.500a2 2 0 0 1 3 3L5.500 14.500z" fill="#fff" stroke="#222" stroke-width="1.100"/><path d="M2.500 11.500l3 3M11 3l3 3" stroke="#222"/><path d="M1 16l2.200-.8-1.400-1.400z" fill="#111"/><path d="M12.500 1.500l3 3" stroke="#777" stroke-width="1.600"/></svg>
    <div class="ct" style="left:22px;top:180px"></div>
    <svg style="left:8px;top:191px" width="14" height="12" viewBox="0 0 14 12"><rect x=".6" y=".6" width="12.300" height="10" fill="#f4f4f4" stroke="#111" stroke-width="1.200"/><path d="M.6 .6l12.300 10M12.900 .6L.6 10.600" stroke="#111" stroke-width="1"/></svg>
    <div class="ct" style="left:22px;top:201px"></div>
    <svg style="left:8px;top:212px" width="15" height="12" viewBox="0 0 15 12"><defs><linearGradient id="rct" x1="0" y1="0" x2="1" y2="1"><stop offset="0" stop-color="#fdfdfd"/><stop offset="1" stop-color="#9c9c9c"/></linearGradient></defs><rect x=".5" y=".5" width="13.500" height="10.500" fill="url(#rct)" stroke="#555"/></svg>
    <div class="ct" style="left:22px;top:222px"></div>
    <svg style="left:6px;top:237px" width="19" height="12" viewBox="0 0 19 12"><path d="M5.500 3.800L18 9.800M5.500 7.800L18 1.600" stroke="#222" stroke-width="1.400"/><ellipse cx="3.200" cy="2.800" rx="2.300" ry="1.900" fill="none" stroke="#222" stroke-width="1.200"/><ellipse cx="3.200" cy="8.800" rx="2.300" ry="1.900" fill="none" stroke="#222" stroke-width="1.200"/></svg>
    <svg style="left:7px;top:257px" width="18" height="15" viewBox="0 0 18 15"><rect x="4.500" y="1.500" width="11" height="10" fill="none" stroke="#111" stroke-width="1.400" stroke-dasharray="1.500 1.500"/><path d="M0 .5l8 5.500-4.500.8L1 11z" fill="#111"/><path d="M15 12h3v3z" fill="#111"/></svg>
    <svg style="left:7px;top:279px" width="17" height="12" viewBox="0 0 17 12"><defs><linearGradient id="gsw" x1="0" y1="0" x2="1" y2="0"><stop offset="0" stop-color="#fff"/><stop offset=".85" stop-color="#111"/></linearGradient></defs><rect x=".5" y=".5" width="15.500" height="10.500" fill="url(#gsw)" stroke="#444"/></svg>
    <svg style="left:7px;top:300px" width="17" height="12" viewBox="0 0 17 12"><defs><linearGradient id="gft" x1="0" y1="0" x2="0" y2="1"><stop offset="0" stop-color="#ddd" stop-opacity="0"/><stop offset=".4" stop-color="#999" stop-opacity=".35"/><stop offset="1" stop-color="#262626"/></linearGradient></defs><rect x=".5" y=".5" width="15.500" height="10.500" fill="#f2f2f2"/><g fill="#bdbdbd"><rect x="1" y="1" width="2.500" height="2.500"/><rect x="6" y="1" width="2.500" height="2.500"/><rect x="11" y="1" width="2.500" height="2.500"/><rect x="3.500" y="3.500" width="2.500" height="2.500"/><rect x="8.500" y="3.500" width="2.500" height="2.500"/><rect x="13.500" y="3.500" width="2.500" height="2.500"/></g><rect x=".5" y=".5" width="15.500" height="10.500" fill="url(#gft)" stroke="#666" stroke-width=".8"/></svg>
    <svg style="left:8px;top:323px" width="15" height="16" viewBox="0 0 15 16"><defs><linearGradient id="nt" x1="0" y1="0" x2="1" y2="1"><stop offset="0" stop-color="#fff"/><stop offset="1" stop-color="#c8c8c8"/></linearGradient></defs><path d="M.6 .6h13v10.400l-4 4H.6z" fill="url(#nt)" stroke="#444" stroke-width="1"/><path d="M13.600 11h-4v4" fill="#aaa" stroke="#444" stroke-width=".9"/><path d="M3 3.500h8M3 5.500h8M3 7.500h8" stroke="#555" stroke-width="1" shape-rendering="crispEdges"/></svg>
    <svg style="left:6px;top:343px" width="17" height="17" viewBox="0 0 17 17"><path d="M1 16l1-3 7.500-7.500 2 2L4 15z" fill="#fff" stroke="#222" stroke-width="1"/><path d="M8.500 4.500l4 4" stroke="#111" stroke-width="2"/><path d="M10.500 6.500l3.200-3.700a1.700 1.700 0 0 1 2.500 2.400L12.500 8.500z" fill="#111"/></svg>
    <div class="ct" style="left:22px;top:357px"></div>
    <svg style="left:5px;top:364px" width="19" height="17" viewBox="0 0 17 17" preserveAspectRatio="none"><path d="M5 16c-1-2.500-3-4.500-4-6.500-.5-1.200 1-2 2-.8l1.600 1.800V3.500c0-1.400 2-1.400 2 0V2c0-1.500 2.200-1.500 2.200 0v1c0-1.400 2.100-1.400 2.100 0v1.500c0-1.200 2-1.200 2 .2 0 3 .6 5.300-.4 8-.4 1.200-.8 2.200-1 3.300z" fill="#fff" stroke="#222" stroke-width="1"/><path d="M6.600 3.500v5M8.800 3v5.500M10.900 4.500v4" stroke="#666" stroke-width=".8"/></svg>
    <svg style="left:6px;top:387px" width="17" height="16" viewBox="0 0 17 16"><defs><radialGradient id="zg" cx=".35" cy=".3" r=".8"><stop offset="0" stop-color="#fff"/><stop offset="1" stop-color="#cfcfcf"/></radialGradient></defs><circle cx="6.500" cy="6" r="5" fill="url(#zg)" stroke="#444" stroke-width="1.300"/><path d="M10 9.500l6 5.500" stroke="#111" stroke-width="2.200"/></svg>
    <svg style="left:4px;top:410px" width="23" height="21" viewBox="0 0 23 21"><rect x="11" y="9" width="9.500" height="9.500" fill="#fff" stroke="#000" stroke-width="3"/><rect x=".5" y=".5" width="12" height="12" fill="#fff" stroke="#000"/><path d="M1.500 11.500l10-10" stroke="#e0001b" stroke-width="1.800"/><path d="M16.500 1.500q3.500 0 3.500 3.500" fill="none" stroke="#111" stroke-width="1"/><path d="M15 1.500l2.500-1.500v3zM20 6.500l-1.500-2.500h3z" fill="#111"/></svg>
    <svg style="left:4px;top:430px" width="11" height="10" viewBox="0 0 11 10"><rect x="4" y="3.500" width="5.500" height="5.500" fill="#fff" stroke="#000" stroke-width="1.800"/><rect x=".5" y=".5" width="6" height="6" fill="#fff" stroke="#555" stroke-width=".9"/><path d="M1 6l5-5" stroke="#e0001b" stroke-width="1"/></svg>
    <div style="left:4px;top:442px;width:12px;height:10px;background:linear-gradient(180deg,#858585,#b5b5b5);border:1px solid #8a8a8a"></div>
    <svg style="left:6px;top:444px" width="8" height="7" viewBox="0 0 8 7"><rect x=".5" y=".5" width="7" height="6" fill="#ddd" stroke="#111"/><rect x="2" y="2" width="4" height="3" fill="#777"/></svg>
    <div style="left:19px;top:441px;font-family:'Liberation Serif',serif;font-weight:bold;font-size:9px;line-height:12px;color:#222">T</div>
    <div class="tbtn" style="top:457px"></div>
    <svg style="left:9px;top:463px" width="12" height="11" viewBox="0 0 12 11"><rect x=".5" y=".5" width="11" height="10" fill="#fff" stroke="#000"/><path d="M1.500 9.500l9-8" stroke="#e0001b" stroke-width="1.800"/></svg>
    <div class="ct" style="left:23px;top:474px"></div>
    <div class="tbtn" style="top:482px"></div>
    <svg style="left:10px;top:487px" width="11" height="11" viewBox="0 0 11 11"><rect x=".5" y=".5" width="10" height="10" fill="#d6d6d6" stroke="#222"/><rect x="1" y="1" width="9" height="1.600" fill="#444"/><rect x="2.500" y="4.500" width="4.500" height="3" fill="none" stroke="#333" stroke-width=".8"/><rect x="4.500" y="5.800" width="4" height="3" fill="#d6d6d6" stroke="#333" stroke-width=".8"/></svg>
    <div class="ct" style="left:23px;top:499px"></div>
  </div>
  <div id="toolsR"></div>

  <div id="win">
    <div id="title">Untitled-1 @ 103%</div>
    <div class="tl" style="left:8px;background:radial-gradient(ellipse 5px 2.5px at 50% 20%,rgba(255,255,255,.85),rgba(255,255,255,0) 100%),radial-gradient(circle at 50% 90%,#ffa79c 0,#ee4b41 40%,#cf352c 75%,#9e2a22 100%);box-shadow:0 0 0 .6px #7d2a24,0 1px 0 rgba(255,255,255,.5)"></div>
    <div class="tl" style="left:28px;background:radial-gradient(ellipse 5px 2.5px at 50% 20%,rgba(255,255,255,.85),rgba(255,255,255,0) 100%),radial-gradient(circle at 50% 90%,#ffe99a 0,#f6b53c 40%,#dc9426 75%,#a86f1c 100%);box-shadow:0 0 0 .6px #8a611f,0 1px 0 rgba(255,255,255,.5)"></div>
    <div class="tl" style="left:48px;background:radial-gradient(ellipse 5px 2.5px at 50% 20%,rgba(255,255,255,.85),rgba(255,255,255,0) 100%),radial-gradient(circle at 50% 90%,#d4f3a0 0,#82c84e 40%,#5fa53a 75%,#3f7a2a 100%);box-shadow:0 0 0 .6px #3c6b2a,0 1px 0 rgba(255,255,255,.5)"></div>
    <div id="paste">
      <div id="page" style="position:absolute"></div>
      <div id="margin" style="position:absolute"></div>
    </div>
    <div id="pasteline"></div>
    <div id="gray"></div>
    <svg class="hr" width="1689" height="16" viewBox="0 0 1689 16" shape-rendering="crispEdges">
<rect width="1689" height="16" fill="#fff"/>
<rect x="0" y="15" width="1689" height="1" fill="#000"/>
<rect x="3" y="13" width="1" height="2" fill="#000"/>
<rect x="9" y="0" width="1" height="15" fill="#000"/>
<rect x="16" y="13" width="1" height="2" fill="#000"/>
<rect x="22" y="11" width="1" height="4" fill="#000"/>
<rect x="28" y="13" width="1" height="2" fill="#000"/>
<rect x="34" y="11" width="1" height="4" fill="#000"/>
<rect x="40" y="13" width="1" height="2" fill="#000"/>
<rect x="47" y="9" width="1" height="6" fill="#000"/>
<rect x="53" y="13" width="1" height="2" fill="#000"/>
<rect x="59" y="11" width="1" height="4" fill="#000"/>
<rect x="65" y="13" width="1" height="2" fill="#000"/>
<rect x="71" y="11" width="1" height="4" fill="#000"/>
<rect x="77" y="13" width="1" height="2" fill="#000"/>
<rect x="84" y="0" width="1" height="15" fill="#000"/>
<rect x="90" y="13" width="1" height="2" fill="#000"/>
<rect x="96" y="11" width="1" height="4" fill="#000"/>
<rect x="102" y="13" width="1" height="2" fill="#000"/>
<rect x="108" y="11" width="1" height="4" fill="#000"/>
<rect x="115" y="13" width="1" height="2" fill="#000"/>
<rect x="121" y="9" width="1" height="6" fill="#000"/>
<rect x="127" y="13" width="1" height="2" fill="#000"/>
<rect x="133" y="11" width="1" height="4" fill="#000"/>
<rect x="139" y="13" width="1" height="2" fill="#000"/>
<rect x="145" y="11" width="1" height="4" fill="#000"/>
<rect x="152" y="13" width="1" height="2" fill="#000"/>
<rect x="158" y="0" width="1" height="15" fill="#000"/>
<rect x="164" y="13" width="1" height="2" fill="#000"/>
<rect x="170" y="11" width="1" height="4" fill="#000"/>
<rect x="176" y="13" width="1" height="2" fill="#000"/>
<rect x="183" y="11" width="1" height="4" fill="#000"/>
<rect x="189" y="13" width="1" height="2" fill="#000"/>
<rect x="195" y="9" width="1" height="6" fill="#000"/>
<rect x="201" y="13" width="1" height="2" fill="#000"/>
<rect x="207" y="11" width="1" height="4" fill="#000"/>
<rect x="213" y="13" width="1" height="2" fill="#000"/>
<rect x="220" y="11" width="1" height="4" fill="#000"/>
<rect x="226" y="13" width="1" height="2" fill="#000"/>
<rect x="232" y="0" width="1" height="15" fill="#000"/>
<rect x="238" y="13" width="1" height="2" fill="#000"/>
<rect x="244" y="11" width="1" height="4" fill="#000"/>
<rect x="251" y="13" width="1" height="2" fill="#000"/>
<rect x="257" y="11" width="1" height="4" fill="#000"/>
<rect x="263" y="13" width="1" height="2" fill="#000"/>
<rect x="269" y="9" width="1" height="6" fill="#000"/>
<rect x="275" y="13" width="1" height="2" fill="#000"/>
<rect x="281" y="11" width="1" height="4" fill="#000"/>
<rect x="288" y="13" width="1" height="2" fill="#000"/>
<rect x="294" y="11" width="1" height="4" fill="#000"/>
<rect x="300" y="13" width="1" height="2" fill="#000"/>
<rect x="306" y="0" width="1" height="15" fill="#000"/>
<rect x="312" y="13" width="1" height="2" fill="#000"/>
<rect x="318" y="11" width="1" height="4" fill="#000"/>
<rect x="325" y="13" width="1" height="2" fill="#000"/>
<rect x="331" y="11" width="1" height="4" fill="#000"/>
<rect x="337" y="13" width="1" height="2" fill="#000"/>
<rect x="343" y="9" width="1" height="6" fill="#000"/>
<rect x="349" y="13" width="1" height="2" fill="#000"/>
<rect x="356" y="11" width="1" height="4" fill="#000"/>
<rect x="362" y="13" width="1" height="2" fill="#000"/>
<rect x="368" y="11" width="1" height="4" fill="#000"/>
<rect x="374" y="13" width="1" height="2" fill="#000"/>
<rect x="380" y="0" width="1" height="15" fill="#000"/>
<rect x="386" y="13" width="1" height="2" fill="#000"/>
<rect x="393" y="11" width="1" height="4" fill="#000"/>
<rect x="399" y="13" width="1" height="2" fill="#000"/>
<rect x="405" y="11" width="1" height="4" fill="#000"/>
<rect x="411" y="13" width="1" height="2" fill="#000"/>
<rect x="417" y="9" width="1" height="6" fill="#000"/>
<rect x="424" y="13" width="1" height="2" fill="#000"/>
<rect x="430" y="11" width="1" height="4" fill="#000"/>
<rect x="436" y="13" width="1" height="2" fill="#000"/>
<rect x="442" y="11" width="1" height="4" fill="#000"/>
<rect x="448" y="13" width="1" height="2" fill="#000"/>
<rect x="454" y="0" width="1" height="15" fill="#000"/>
<rect x="461" y="13" width="1" height="2" fill="#000"/>
<rect x="467" y="11" width="1" height="4" fill="#000"/>
<rect x="473" y="13" width="1" height="2" fill="#000"/>
<rect x="479" y="11" width="1" height="4" fill="#000"/>
<rect x="485" y="13" width="1" height="2" fill="#000"/>
<rect x="492" y="9" width="1" height="6" fill="#000"/>
<rect x="498" y="13" width="1" height="2" fill="#000"/>
<rect x="504" y="11" width="1" height="4" fill="#000"/>
<rect x="510" y="13" width="1" height="2" fill="#000"/>
<rect x="516" y="11" width="1" height="4" fill="#000"/>
<rect x="522" y="13" width="1" height="2" fill="#000"/>
<rect x="529" y="0" width="1" height="15" fill="#000"/>
<rect x="535" y="13" width="1" height="2" fill="#000"/>
<rect x="541" y="11" width="1" height="4" fill="#000"/>
<rect x="547" y="13" width="1" height="2" fill="#000"/>
<rect x="553" y="11" width="1" height="4" fill="#000"/>
<rect x="560" y="13" width="1" height="2" fill="#000"/>
<rect x="566" y="9" width="1" height="6" fill="#000"/>
<rect x="572" y="13" width="1" height="2" fill="#000"/>
<rect x="578" y="11" width="1" height="4" fill="#000"/>
<rect x="584" y="13" width="1" height="2" fill="#000"/>
<rect x="590" y="11" width="1" height="4" fill="#000"/>
<rect x="597" y="13" width="1" height="2" fill="#000"/>
<rect x="603" y="0" width="1" height="15" fill="#000"/>
<rect x="609" y="13" width="1" height="2" fill="#000"/>
<rect x="615" y="11" width="1" height="4" fill="#000"/>
<rect x="621" y="13" width="1" height="2" fill="#000"/>
<rect x="627" y="11" width="1" height="4" fill="#000"/>
<rect x="634" y="13" width="1" height="2" fill="#000"/>
<rect x="640" y="9" width="1" height="6" fill="#000"/>
<rect x="646" y="13" width="1" height="2" fill="#000"/>
<rect x="652" y="11" width="1" height="4" fill="#000"/>
<rect x="658" y="13" width="1" height="2" fill="#000"/>
<rect x="665" y="11" width="1" height="4" fill="#000"/>
<rect x="671" y="13" width="1" height="2" fill="#000"/>
<rect x="677" y="0" width="1" height="15" fill="#000"/>
<rect x="683" y="13" width="1" height="2" fill="#000"/>
<rect x="689" y="11" width="1" height="4" fill="#000"/>
<rect x="695" y="13" width="1" height="2" fill="#000"/>
<rect x="702" y="11" width="1" height="4" fill="#000"/>
<rect x="708" y="13" width="1" height="2" fill="#000"/>
<rect x="714" y="9" width="1" height="6" fill="#000"/>
<rect x="720" y="13" width="1" height="2" fill="#000"/>
<rect x="726" y="11" width="1" height="4" fill="#000"/>
<rect x="733" y="13" width="1" height="2" fill="#000"/>
<rect x="739" y="11" width="1" height="4" fill="#000"/>
<rect x="745" y="13" width="1" height="2" fill="#000"/>
<rect x="751" y="0" width="1" height="15" fill="#000"/>
<rect x="757" y="13" width="1" height="2" fill="#000"/>
<rect x="763" y="11" width="1" height="4" fill="#000"/>
<rect x="770" y="13" width="1" height="2" fill="#000"/>
<rect x="776" y="11" width="1" height="4" fill="#000"/>
<rect x="782" y="13" width="1" height="2" fill="#000"/>
<rect x="788" y="9" width="1" height="6" fill="#000"/>
<rect x="794" y="13" width="1" height="2" fill="#000"/>
<rect x="801" y="11" width="1" height="4" fill="#000"/>
<rect x="807" y="13" width="1" height="2" fill="#000"/>
<rect x="813" y="11" width="1" height="4" fill="#000"/>
<rect x="819" y="13" width="1" height="2" fill="#000"/>
<rect x="825" y="0" width="1" height="15" fill="#000"/>
<rect x="831" y="13" width="1" height="2" fill="#000"/>
<rect x="838" y="11" width="1" height="4" fill="#000"/>
<rect x="844" y="13" width="1" height="2" fill="#000"/>
<rect x="850" y="11" width="1" height="4" fill="#000"/>
<rect x="856" y="13" width="1" height="2" fill="#000"/>
<rect x="862" y="9" width="1" height="6" fill="#000"/>
<rect x="868" y="13" width="1" height="2" fill="#000"/>
<rect x="875" y="11" width="1" height="4" fill="#000"/>
<rect x="881" y="13" width="1" height="2" fill="#000"/>
<rect x="887" y="11" width="1" height="4" fill="#000"/>
<rect x="893" y="13" width="1" height="2" fill="#000"/>
<rect x="899" y="0" width="1" height="15" fill="#000"/>
<rect x="906" y="13" width="1" height="2" fill="#000"/>
<rect x="912" y="11" width="1" height="4" fill="#000"/>
<rect x="918" y="13" width="1" height="2" fill="#000"/>
<rect x="924" y="11" width="1" height="4" fill="#000"/>
<rect x="930" y="13" width="1" height="2" fill="#000"/>
<rect x="936" y="9" width="1" height="6" fill="#000"/>
<rect x="943" y="13" width="1" height="2" fill="#000"/>
<rect x="949" y="11" width="1" height="4" fill="#000"/>
<rect x="955" y="13" width="1" height="2" fill="#000"/>
<rect x="961" y="11" width="1" height="4" fill="#000"/>
<rect x="967" y="13" width="1" height="2" fill="#000"/>
<rect x="974" y="0" width="1" height="15" fill="#000"/>
<rect x="980" y="13" width="1" height="2" fill="#000"/>
<rect x="986" y="11" width="1" height="4" fill="#000"/>
<rect x="992" y="13" width="1" height="2" fill="#000"/>
<rect x="998" y="11" width="1" height="4" fill="#000"/>
<rect x="1004" y="13" width="1" height="2" fill="#000"/>
<rect x="1011" y="9" width="1" height="6" fill="#000"/>
<rect x="1017" y="13" width="1" height="2" fill="#000"/>
<rect x="1023" y="11" width="1" height="4" fill="#000"/>
<rect x="1029" y="13" width="1" height="2" fill="#000"/>
<rect x="1035" y="11" width="1" height="4" fill="#000"/>
<rect x="1042" y="13" width="1" height="2" fill="#000"/>
<rect x="1048" y="0" width="1" height="15" fill="#000"/>
<rect x="1054" y="13" width="1" height="2" fill="#000"/>
<rect x="1060" y="11" width="1" height="4" fill="#000"/>
<rect x="1066" y="13" width="1" height="2" fill="#000"/>
<rect x="1072" y="11" width="1" height="4" fill="#000"/>
<rect x="1079" y="13" width="1" height="2" fill="#000"/>
<rect x="1085" y="9" width="1" height="6" fill="#000"/>
<rect x="1091" y="13" width="1" height="2" fill="#000"/>
<rect x="1097" y="11" width="1" height="4" fill="#000"/>
<rect x="1103" y="13" width="1" height="2" fill="#000"/>
<rect x="1110" y="11" width="1" height="4" fill="#000"/>
<rect x="1116" y="13" width="1" height="2" fill="#000"/>
<rect x="1122" y="0" width="1" height="15" fill="#000"/>
<rect x="1128" y="13" width="1" height="2" fill="#000"/>
<rect x="1134" y="11" width="1" height="4" fill="#000"/>
<rect x="1140" y="13" width="1" height="2" fill="#000"/>
<rect x="1147" y="11" width="1" height="4" fill="#000"/>
<rect x="1153" y="13" width="1" height="2" fill="#000"/>
<rect x="1159" y="9" width="1" height="6" fill="#000"/>
<rect x="1165" y="13" width="1" height="2" fill="#000"/>
<rect x="1171" y="11" width="1" height="4" fill="#000"/>
<rect x="1178" y="13" width="1" height="2" fill="#000"/>
<rect x="1184" y="11" width="1" height="4" fill="#000"/>
<rect x="1190" y="13" width="1" height="2" fill="#000"/>
<rect x="1196" y="0" width="1" height="15" fill="#000"/>
<rect x="1202" y="13" width="1" height="2" fill="#000"/>
<rect x="1208" y="11" width="1" height="4" fill="#000"/>
<rect x="1215" y="13" width="1" height="2" fill="#000"/>
<rect x="1221" y="11" width="1" height="4" fill="#000"/>
<rect x="1227" y="13" width="1" height="2" fill="#000"/>
<rect x="1233" y="9" width="1" height="6" fill="#000"/>
<rect x="1239" y="13" width="1" height="2" fill="#000"/>
<rect x="1245" y="11" width="1" height="4" fill="#000"/>
<rect x="1252" y="13" width="1" height="2" fill="#000"/>
<rect x="1258" y="11" width="1" height="4" fill="#000"/>
<rect x="1264" y="13" width="1" height="2" fill="#000"/>
<rect x="1270" y="0" width="1" height="15" fill="#000"/>
<rect x="1276" y="13" width="1" height="2" fill="#000"/>
<rect x="1283" y="11" width="1" height="4" fill="#000"/>
<rect x="1289" y="13" width="1" height="2" fill="#000"/>
<rect x="1295" y="11" width="1" height="4" fill="#000"/>
<rect x="1301" y="13" width="1" height="2" fill="#000"/>
<rect x="1307" y="9" width="1" height="6" fill="#000"/>
<rect x="1313" y="13" width="1" height="2" fill="#000"/>
<rect x="1320" y="11" width="1" height="4" fill="#000"/>
<rect x="1326" y="13" width="1" height="2" fill="#000"/>
<rect x="1332" y="11" width="1" height="4" fill="#000"/>
<rect x="1338" y="13" width="1" height="2" fill="#000"/>
<rect x="1344" y="0" width="1" height="15" fill="#000"/>
<rect x="1351" y="13" width="1" height="2" fill="#000"/>
<rect x="1357" y="11" width="1" height="4" fill="#000"/>
<rect x="1363" y="13" width="1" height="2" fill="#000"/>
<rect x="1369" y="11" width="1" height="4" fill="#000"/>
<rect x="1375" y="13" width="1" height="2" fill="#000"/>
<rect x="1381" y="9" width="1" height="6" fill="#000"/>
<rect x="1388" y="13" width="1" height="2" fill="#000"/>
<rect x="1394" y="11" width="1" height="4" fill="#000"/>
<rect x="1400" y="13" width="1" height="2" fill="#000"/>
<rect x="1406" y="11" width="1" height="4" fill="#000"/>
<rect x="1412" y="13" width="1" height="2" fill="#000"/>
<rect x="1419" y="0" width="1" height="15" fill="#000"/>
<rect x="1425" y="13" width="1" height="2" fill="#000"/>
<rect x="1431" y="11" width="1" height="4" fill="#000"/>
<rect x="1437" y="13" width="1" height="2" fill="#000"/>
<rect x="1443" y="11" width="1" height="4" fill="#000"/>
<rect x="1449" y="13" width="1" height="2" fill="#000"/>
<rect x="1456" y="9" width="1" height="6" fill="#000"/>
<rect x="1462" y="13" width="1" height="2" fill="#000"/>
<rect x="1468" y="11" width="1" height="4" fill="#000"/>
<rect x="1474" y="13" width="1" height="2" fill="#000"/>
<rect x="1480" y="11" width="1" height="4" fill="#000"/>
<rect x="1486" y="13" width="1" height="2" fill="#000"/>
<rect x="1493" y="0" width="1" height="15" fill="#000"/>
<rect x="1499" y="13" width="1" height="2" fill="#000"/>
<rect x="1505" y="11" width="1" height="4" fill="#000"/>
<rect x="1511" y="13" width="1" height="2" fill="#000"/>
<rect x="1517" y="11" width="1" height="4" fill="#000"/>
<rect x="1524" y="13" width="1" height="2" fill="#000"/>
<rect x="1530" y="9" width="1" height="6" fill="#000"/>
<rect x="1536" y="13" width="1" height="2" fill="#000"/>
<rect x="1542" y="11" width="1" height="4" fill="#000"/>
<rect x="1548" y="13" width="1" height="2" fill="#000"/>
<rect x="1554" y="11" width="1" height="4" fill="#000"/>
<rect x="1561" y="13" width="1" height="2" fill="#000"/>
<rect x="1567" y="0" width="1" height="15" fill="#000"/>
<rect x="1573" y="13" width="1" height="2" fill="#000"/>
<rect x="1579" y="11" width="1" height="4" fill="#000"/>
<rect x="1585" y="13" width="1" height="2" fill="#000"/>
<rect x="1592" y="11" width="1" height="4" fill="#000"/>
<rect x="1598" y="13" width="1" height="2" fill="#000"/>
<rect x="1604" y="9" width="1" height="6" fill="#000"/>
<rect x="1610" y="13" width="1" height="2" fill="#000"/>
<rect x="1616" y="11" width="1" height="4" fill="#000"/>
<rect x="1622" y="13" width="1" height="2" fill="#000"/>
<rect x="1629" y="11" width="1" height="4" fill="#000"/>
<rect x="1635" y="13" width="1" height="2" fill="#000"/>
<rect x="1641" y="0" width="1" height="15" fill="#000"/>
<rect x="1647" y="13" width="1" height="2" fill="#000"/>
<rect x="1653" y="11" width="1" height="4" fill="#000"/>
<rect x="1660" y="13" width="1" height="2" fill="#000"/>
<rect x="1666" y="11" width="1" height="4" fill="#000"/>
<rect x="1672" y="13" width="1" height="2" fill="#000"/>
<rect x="1678" y="9" width="1" height="6" fill="#000"/>
<rect x="1684" y="13" width="1" height="2" fill="#000"/>
<g font-family="Liberation Sans, sans-serif" font-size="9.5" fill="#000" shape-rendering="auto">
<text x="10.8" y="8.5">42</text>
<text x="85.8" y="8.5">36</text>
<text x="159.8" y="8.5">30</text>
<text x="233.8" y="8.5">24</text>
<text x="307.8" y="8.5">18</text>
<text x="381.8" y="8.5">12</text>
<text x="455.8" y="8.5">6</text>
<text x="530.8" y="8.5">0</text>
<text x="604.8" y="8.5">6</text>
<text x="678.8" y="8.5">12</text>
<text x="752.8" y="8.5">18</text>
<text x="826.8" y="8.5">24</text>
<text x="900.8" y="8.5">30</text>
<text x="975.8" y="8.5">36</text>
<text x="1049.8" y="8.5">42</text>
<text x="1123.8" y="8.5">48</text>
<text x="1197.8" y="8.5">54</text>
<text x="1271.8" y="8.5">60</text>
<text x="1345.8" y="8.5">66</text>
<text x="1420.8" y="8.5">72</text>
<text x="1494.8" y="8.5">78</text>
<text x="1568.8" y="8.5">84</text>
<text x="1642.8" y="8.5">90</text>
</g>
<path d="M313.5 0v15" stroke="#000" stroke-dasharray="1 1"/>
</svg>
    <svg class="vr" width="16" height="828" viewBox="0 0 16 828" shape-rendering="crispEdges">
<rect width="16" height="828" fill="#fff"/>
<rect x="15" y="0" width="1" height="828" fill="#000"/>
<rect x="11" y="2" width="4" height="1" fill="#000"/>
<rect x="13" y="8" width="2" height="1" fill="#000"/>
<rect x="9" y="14" width="6" height="1" fill="#000"/>
<rect x="13" y="20" width="2" height="1" fill="#000"/>
<rect x="11" y="26" width="4" height="1" fill="#000"/>
<rect x="13" y="32" width="2" height="1" fill="#000"/>
<rect x="11" y="39" width="4" height="1" fill="#000"/>
<rect x="13" y="45" width="2" height="1" fill="#000"/>
<rect x="0" y="51" width="15" height="1" fill="#000"/>
<rect x="13" y="57" width="2" height="1" fill="#000"/>
<rect x="11" y="63" width="4" height="1" fill="#000"/>
<rect x="13" y="70" width="2" height="1" fill="#000"/>
<rect x="11" y="76" width="4" height="1" fill="#000"/>
<rect x="13" y="82" width="2" height="1" fill="#000"/>
<rect x="9" y="88" width="6" height="1" fill="#000"/>
<rect x="13" y="94" width="2" height="1" fill="#000"/>
<rect x="11" y="100" width="4" height="1" fill="#000"/>
<rect x="13" y="107" width="2" height="1" fill="#000"/>
<rect x="11" y="113" width="4" height="1" fill="#000"/>
<rect x="13" y="119" width="2" height="1" fill="#000"/>
<rect x="0" y="125" width="15" height="1" fill="#000"/>
<rect x="13" y="131" width="2" height="1" fill="#000"/>
<rect x="11" y="138" width="4" height="1" fill="#000"/>
<rect x="13" y="144" width="2" height="1" fill="#000"/>
<rect x="11" y="150" width="4" height="1" fill="#000"/>
<rect x="13" y="156" width="2" height="1" fill="#000"/>
<rect x="9" y="162" width="6" height="1" fill="#000"/>
<rect x="13" y="168" width="2" height="1" fill="#000"/>
<rect x="11" y="175" width="4" height="1" fill="#000"/>
<rect x="13" y="181" width="2" height="1" fill="#000"/>
<rect x="11" y="187" width="4" height="1" fill="#000"/>
<rect x="13" y="193" width="2" height="1" fill="#000"/>
<rect x="0" y="199" width="15" height="1" fill="#000"/>
<rect x="13" y="206" width="2" height="1" fill="#000"/>
<rect x="11" y="212" width="4" height="1" fill="#000"/>
<rect x="13" y="218" width="2" height="1" fill="#000"/>
<rect x="11" y="224" width="4" height="1" fill="#000"/>
<rect x="13" y="230" width="2" height="1" fill="#000"/>
<rect x="9" y="236" width="6" height="1" fill="#000"/>
<rect x="13" y="243" width="2" height="1" fill="#000"/>
<rect x="11" y="249" width="4" height="1" fill="#000"/>
<rect x="13" y="255" width="2" height="1" fill="#000"/>
<rect x="11" y="261" width="4" height="1" fill="#000"/>
<rect x="13" y="267" width="2" height="1" fill="#000"/>
<rect x="0" y="273" width="15" height="1" fill="#000"/>
<rect x="13" y="280" width="2" height="1" fill="#000"/>
<rect x="11" y="286" width="4" height="1" fill="#000"/>
<rect x="13" y="292" width="2" height="1" fill="#000"/>
<rect x="11" y="298" width="4" height="1" fill="#000"/>
<rect x="13" y="304" width="2" height="1" fill="#000"/>
<rect x="9" y="311" width="6" height="1" fill="#000"/>
<rect x="13" y="317" width="2" height="1" fill="#000"/>
<rect x="11" y="323" width="4" height="1" fill="#000"/>
<rect x="13" y="329" width="2" height="1" fill="#000"/>
<rect x="11" y="335" width="4" height="1" fill="#000"/>
<rect x="13" y="341" width="2" height="1" fill="#000"/>
<rect x="0" y="348" width="15" height="1" fill="#000"/>
<rect x="13" y="354" width="2" height="1" fill="#000"/>
<rect x="11" y="360" width="4" height="1" fill="#000"/>
<rect x="13" y="366" width="2" height="1" fill="#000"/>
<rect x="11" y="372" width="4" height="1" fill="#000"/>
<rect x="13" y="379" width="2" height="1" fill="#000"/>
<rect x="9" y="385" width="6" height="1" fill="#000"/>
<rect x="13" y="391" width="2" height="1" fill="#000"/>
<rect x="11" y="397" width="4" height="1" fill="#000"/>
<rect x="13" y="403" width="2" height="1" fill="#000"/>
<rect x="11" y="409" width="4" height="1" fill="#000"/>
<rect x="13" y="416" width="2" height="1" fill="#000"/>
<rect x="0" y="422" width="15" height="1" fill="#000"/>
<rect x="13" y="428" width="2" height="1" fill="#000"/>
<rect x="11" y="434" width="4" height="1" fill="#000"/>
<rect x="13" y="440" width="2" height="1" fill="#000"/>
<rect x="11" y="447" width="4" height="1" fill="#000"/>
<rect x="13" y="453" width="2" height="1" fill="#000"/>
<rect x="9" y="459" width="6" height="1" fill="#000"/>
<rect x="13" y="465" width="2" height="1" fill="#000"/>
<rect x="11" y="471" width="4" height="1" fill="#000"/>
<rect x="13" y="477" width="2" height="1" fill="#000"/>
<rect x="11" y="484" width="4" height="1" fill="#000"/>
<rect x="13" y="490" width="2" height="1" fill="#000"/>
<rect x="0" y="496" width="15" height="1" fill="#000"/>
<rect x="13" y="502" width="2" height="1" fill="#000"/>
<rect x="11" y="508" width="4" height="1" fill="#000"/>
<rect x="13" y="515" width="2" height="1" fill="#000"/>
<rect x="11" y="521" width="4" height="1" fill="#000"/>
<rect x="13" y="527" width="2" height="1" fill="#000"/>
<rect x="9" y="533" width="6" height="1" fill="#000"/>
<rect x="13" y="539" width="2" height="1" fill="#000"/>
<rect x="11" y="545" width="4" height="1" fill="#000"/>
<rect x="13" y="552" width="2" height="1" fill="#000"/>
<rect x="11" y="558" width="4" height="1" fill="#000"/>
<rect x="13" y="564" width="2" height="1" fill="#000"/>
<rect x="0" y="570" width="15" height="1" fill="#000"/>
<rect x="13" y="576" width="2" height="1" fill="#000"/>
<rect x="11" y="582" width="4" height="1" fill="#000"/>
<rect x="13" y="589" width="2" height="1" fill="#000"/>
<rect x="11" y="595" width="4" height="1" fill="#000"/>
<rect x="13" y="601" width="2" height="1" fill="#000"/>
<rect x="9" y="607" width="6" height="1" fill="#000"/>
<rect x="13" y="613" width="2" height="1" fill="#000"/>
<rect x="11" y="620" width="4" height="1" fill="#000"/>
<rect x="13" y="626" width="2" height="1" fill="#000"/>
<rect x="11" y="632" width="4" height="1" fill="#000"/>
<rect x="13" y="638" width="2" height="1" fill="#000"/>
<rect x="0" y="644" width="15" height="1" fill="#000"/>
<rect x="13" y="650" width="2" height="1" fill="#000"/>
<rect x="11" y="657" width="4" height="1" fill="#000"/>
<rect x="13" y="663" width="2" height="1" fill="#000"/>
<rect x="11" y="669" width="4" height="1" fill="#000"/>
<rect x="13" y="675" width="2" height="1" fill="#000"/>
<rect x="9" y="681" width="6" height="1" fill="#000"/>
<rect x="13" y="688" width="2" height="1" fill="#000"/>
<rect x="11" y="694" width="4" height="1" fill="#000"/>
<rect x="13" y="700" width="2" height="1" fill="#000"/>
<rect x="11" y="706" width="4" height="1" fill="#000"/>
<rect x="13" y="712" width="2" height="1" fill="#000"/>
<rect x="0" y="718" width="15" height="1" fill="#000"/>
<rect x="13" y="725" width="2" height="1" fill="#000"/>
<rect x="11" y="731" width="4" height="1" fill="#000"/>
<rect x="13" y="737" width="2" height="1" fill="#000"/>
<rect x="11" y="743" width="4" height="1" fill="#000"/>
<rect x="13" y="749" width="2" height="1" fill="#000"/>
<rect x="9" y="756" width="6" height="1" fill="#000"/>
<rect x="13" y="762" width="2" height="1" fill="#000"/>
<rect x="11" y="768" width="4" height="1" fill="#000"/>
<rect x="13" y="774" width="2" height="1" fill="#000"/>
<rect x="11" y="780" width="4" height="1" fill="#000"/>
<rect x="13" y="786" width="2" height="1" fill="#000"/>
<rect x="0" y="793" width="15" height="1" fill="#000"/>
<rect x="13" y="799" width="2" height="1" fill="#000"/>
<rect x="11" y="805" width="4" height="1" fill="#000"/>
<rect x="13" y="811" width="2" height="1" fill="#000"/>
<rect x="11" y="817" width="4" height="1" fill="#000"/>
<rect x="13" y="824" width="2" height="1" fill="#000"/>
<g font-family="Liberation Sans, sans-serif" font-size="9.5" fill="#000" text-anchor="middle" shape-rendering="auto">
<text x="4.5" y="60">1</text>
<text x="4.5" y="68">2</text>
<text x="4.5" y="134">1</text>
<text x="4.5" y="142">8</text>
<text x="4.5" y="208">2</text>
<text x="4.5" y="216">4</text>
<text x="4.5" y="282">3</text>
<text x="4.5" y="290">0</text>
<text x="4.5" y="357">3</text>
<text x="4.5" y="365">6</text>
<text x="4.5" y="431">4</text>
<text x="4.5" y="439">2</text>
<text x="4.5" y="505">4</text>
<text x="4.5" y="513">8</text>
<text x="4.5" y="579">5</text>
<text x="4.5" y="587">4</text>
<text x="4.5" y="653">6</text>
<text x="4.5" y="661">0</text>
<text x="4.5" y="727">6</text>
<text x="4.5" y="735">6</text>
<text x="4.5" y="802">7</text>
<text x="4.5" y="810">2</text>
</g>
<path d="M0 6.5h15" stroke="#000" stroke-dasharray="1 1"/>
</svg>
    <div id="corner"><svg width="15" height="15" viewBox="0 0 15 15" shape-rendering="crispEdges" style="position:absolute;left:0;top:0"><path d="M5.500 0v15M0 5.500h15" stroke="#000" stroke-dasharray="1 1"/><rect x="4" y="4" width="3" height="3" fill="#fff"/><path d="M5.500 4v3M4 5.500h3" stroke="#000" stroke-dasharray="1 1"/></svg></div>
    <div id="winL"></div>
    <div id="vscroll"></div><div id="vthumb"></div>
    <div id="status">
      <div style="left:0;top:0;width:275px;height:1px;background:#3a3a3a"></div>
      <div style="left:0;top:1px;width:274px;height:14px;background:#fafafa"></div>
      <div style="left:274px;top:0;width:1px;height:15px;background:#3a3a3a"></div>
      <svg style="left:3px;top:4px" width="7" height="8" viewBox="0 0 7 8"><rect x="0" y="0" width="1.200" height="8" fill="#9a9a9a"/><path d="M6.500 0v8L1.800 4z" fill="#9a9a9a"/></svg>
      <svg style="left:19px;top:4px" width="6" height="8" viewBox="0 0 6 8"><path d="M5.500 0v8L.5 4z" fill="#9a9a9a"/></svg>
      <div style="left:32px;top:2px;font-size:10.500px;line-height:12px;color:#222">1</div>
      <div style="left:110px;top:1px;width:1px;height:14px;background:#bdbdbd"></div>
      <div style="left:111px;top:1px;width:17px;height:14px;background:#f0f0f0"></div>
      <div style="left:116px;top:7px;border-left:4px solid transparent;border-right:4px solid transparent;border-top:5px solid #111"></div>
      <svg style="left:133px;top:4px" width="6" height="8" viewBox="0 0 6 8"><path d="M.5 0v8l5-4z" fill="#9a9a9a"/></svg>
      <svg style="left:147px;top:4px" width="7" height="8" viewBox="0 0 7 8"><rect x="5.800" y="0" width="1.200" height="8" fill="#9a9a9a"/><path d="M.5 0v8l4.700-4z" fill="#9a9a9a"/></svg>
      <div style="left:162px;top:2px;width:12px;height:12px;border-radius:6px;background:radial-gradient(circle at 45% 30%,#8dfc5a 0,#35d40f 45%,#1fa800 100%)"></div>
      <div style="left:177px;top:2px;font-size:10.500px;line-height:12px;color:#1a1a1a;letter-spacing:-.25px">No errors</div>
      <div style="left:237px;top:6px;border-left:3px solid transparent;border-right:3px solid transparent;border-top:3px solid #333"></div>
      <svg style="left:253px;top:2px" width="17" height="13" viewBox="0 0 17 13"><circle cx="6.500" cy="6.500" r="5.500" fill="#d8d8d8" stroke="#8a8a8a" stroke-width="1.200"/><path d="M4 3.500h3.500l2 2v4H4z" fill="#f4f4f4" stroke="#555" stroke-width=".9"/><path d="M13 10.500h3.500l-1.750 2.300z" fill="#111"/></svg>
    </div><div id="hthumb"></div>
    <svg style="left:1707px;top:869px" width="12" height="12" viewBox="0 0 12 12" shape-rendering="crispEdges"><g fill="#8c8c8c"><rect x="10" y="2" width="1" height="1"/><rect x="10" y="4" width="1" height="1"/><rect x="8" y="4" width="1" height="1"/><rect x="10" y="6" width="1" height="1"/><rect x="8" y="6" width="1" height="1"/><rect x="6" y="6" width="1" height="1"/><rect x="10" y="8" width="1" height="1"/><rect x="8" y="8" width="1" height="1"/><rect x="6" y="8" width="1" height="1"/><rect x="4" y="8" width="1" height="1"/><rect x="10" y="10" width="1" height="1"/><rect x="8" y="10" width="1" height="1"/><rect x="6" y="10" width="1" height="1"/><rect x="4" y="10" width="1" height="1"/><rect x="2" y="10" width="1" height="1"/></g></svg>
  </div>

  <div id="phead"><svg style="position:absolute;left:155px;top:3px" width="8" height="5" viewBox="0 0 8 5"><path d="M3.500 0L0 2.500 3.500 5zM7.500 0L4 2.500 7.500 5z" fill="#d0d0d0"/></svg></div><div id="pheadline"></div>
  <div id="panel">
    <div class="pgrip" style="top:4px"></div>
    <svg style="left:10px;top:17px" width="18" height="17" viewBox="0 0 18 17"><defs><linearGradient id="pgi" x1="0" y1="0" x2="0" y2="1"><stop offset="0" stop-color="#fafafa"/><stop offset="1" stop-color="#cfcfcf"/></linearGradient></defs><path d="M.6 5.500l3-3h10.800l3 3v9H.6z" fill="url(#pgi)" stroke="#222" stroke-width="1.100"/><path d="M.6 5.500h3v-3M17.400 5.500h-3v-3" fill="none" stroke="#222" stroke-width=".9"/><path d="M9 0v17" stroke="#222" stroke-width="1"/></svg>
    <div class="plab" style="top:21px">PAGES</div>
    <svg style="left:10px;top:47px" width="19" height="18" viewBox="0 0 19 18"><path d="M9.500 7L18 11.500 9.500 17 1 11.500z" fill="#3a3a3a"/><path d="M9.500 4L18 8.500 9.500 13 1 8.500z" fill="#999" opacity=".9"/><path d="M9.500 .8L18 5.500 9.500 10 1 5.500z" fill="#f6f6f6" stroke="#aaa" stroke-width=".7"/></svg>
    <div class="plab" style="top:51px">LAYERS</div>
    <svg style="left:10px;top:77px" width="19" height="16" viewBox="0 0 19 16"><g fill="none" stroke="#222" stroke-width="1.200"><ellipse cx="4.500" cy="4.500" rx="3" ry="4" transform="rotate(-40 4.500 4.500)"/><ellipse cx="9" cy="9" rx="2.200" ry="3" transform="rotate(-40 9 9)"/><ellipse cx="14" cy="10.500" rx="4" ry="3.300" transform="rotate(-15 14 10.500)"/></g></svg>
    <div class="plab" style="top:81px">LINKS</div>
    <div class="psep" style="top:103px"></div>
    <div class="pgrip" style="top:108px"></div>
    <svg style="left:10px;top:123px" width="17" height="13" viewBox="0 0 17 13" shape-rendering="crispEdges"><path d="M0 .5h17" stroke="#333" stroke-dasharray="1 1"/><rect x="0" y="3" width="17" height="1" fill="#333"/><rect x="0" y="6" width="17" height="2" fill="#333"/><rect x="0" y="10" width="17" height="3" fill="#333"/></svg>
    <div class="plab" style="top:125px">STROKE</div>
    <svg style="left:9px;top:152px" width="20" height="16" viewBox="0 0 20 16"><path d="M10.500 .8c5.500-1 9.500 1.700 8.500 5-.7 2.200-4 1.200-3.500 3.500.6 2.700-2.500 5.700-7.500 5.700-9 0-9.500-11.800 2.500-14.200z" fill="#3d3d3d"/><g fill="#eee"><ellipse cx="13.500" cy="3.500" rx="1.800" ry="1.400"/><ellipse cx="8" cy="4" rx="1.700" ry="1.300"/><ellipse cx="4" cy="7.500" rx="1.500" ry="1.400"/><ellipse cx="5" cy="11.500" rx="1.600" ry="1.400"/><ellipse cx="10" cy="12" rx="1.700" ry="1.400"/></g></svg>
    <div class="plab" style="top:155px">COLOR</div>
    <div class="psep" style="top:177px"></div>
    <div class="pgrip" style="top:182px"></div>
    <svg style="left:10px;top:197px" width="17" height="13" viewBox="0 0 17 13" shape-rendering="crispEdges"><rect width="17" height="13" fill="#2c2c2c"/><rect x="1" y="1" width="3" height="3" fill="#444"/><rect x="5" y="1" width="3" height="3" fill="#777"/><rect x="9" y="1" width="3" height="3" fill="#999"/><rect x="13" y="1" width="3" height="3" fill="#fff"/><rect x="1" y="5" width="3" height="3" fill="#666"/><rect x="5" y="5" width="3" height="3" fill="#aaa"/><rect x="9" y="5" width="3" height="3" fill="#555"/><rect x="13" y="5" width="3" height="3" fill="#fff"/><rect x="1" y="9" width="3" height="3" fill="#888"/><rect x="5" y="9" width="3" height="3" fill="#ddd"/><rect x="9" y="9" width="3" height="3" fill="#fff"/><rect x="13" y="9" width="3" height="3" fill="#ccc"/></svg>
    <div class="plab" style="top:199px">SWATCHES</div>
  </div>
  <div id="panelL"></div><div id="panelB"></div>
</div>
</body>
</html>
